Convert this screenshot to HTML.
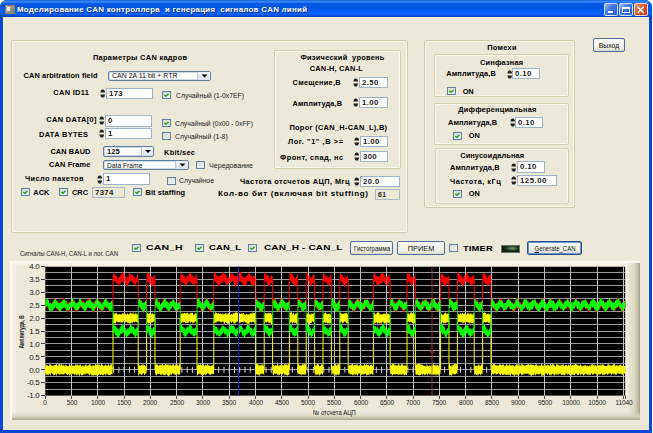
<!DOCTYPE html><html><head><meta charset="utf-8"><style>
*{margin:0;padding:0;box-sizing:border-box}
html,body{width:653px;height:433px;overflow:hidden;background:#fff;font-family:"Liberation Sans",sans-serif}
.win{position:absolute;left:0;top:0;width:652px;height:433px;background:#0a47d8;border-radius:7px 7px 0 0;overflow:hidden}
.title{position:absolute;left:0;top:0;width:652px;height:17px;background:linear-gradient(#1262dc 0px,#3a8cfa 1.8px,#0a5ae8 3.5px,#0054e3 8px,#005ff5 12px,#0462f8 14.3px,#0a42c8 16.2px,#0a3cc0 17px)}
.client{position:absolute;left:3px;top:17px;width:646px;height:413px;background:#ece9d8;border-top:1px solid #f7f4e4;border-left:1px solid #f4f1e2}
.t{position:absolute;white-space:pre;color:#000}
.grp{position:absolute;border:1px solid #d3cfaa;border-radius:2px;box-shadow:inset 0 0 0 1px #faf8ec}
.edit{position:absolute;background:#fff;border:1px solid #9db3c9;padding-left:2px;color:#222;white-space:pre;overflow:hidden}
.edit.dis{background:#ece9d8;border-color:#a9b8c6}
.spin{position:absolute}
.chk{position:absolute}
.combo{position:absolute;background:#fff;border:1px solid #5f7fa2;border-radius:2px;overflow:hidden;box-shadow:inset 0 0 0 0.5px #9fb5cc}
.ctext{position:absolute;left:3px;top:0;white-space:pre;color:#111}
.cbtn{position:absolute;right:0;top:-1px;bottom:-1px;background:linear-gradient(#f4f6fb,#d9e2f2);border-left:1px solid #b9c8e0}
.cbtn svg{display:block}
.btn{position:absolute;border:1px solid #4f6f98;border-radius:2px;background:linear-gradient(#fdfdfb,#f0efe8 70%,#dcd9cf);text-align:center;white-space:pre;color:#111}
.btn.def{border:1px solid #2c4f86;box-shadow:inset 0 0 0 1px #6d95d8}
svg{position:absolute}
</style></head><body>
<div class="win">
<div class="title"></div>
<div style="position:absolute;left:5px;top:5px;width:10px;height:9px;background:linear-gradient(135deg,#c8c0b0,#9a9080 60%,#7a7060);border:1px solid #8a806c"><div style="position:absolute;left:1px;top:1px;width:3px;height:4px;background:#f4f4f0"></div></div>
<div class="t" style="left:17px;top:4px;font-size:7.9px;font-weight:bold;color:#fff;line-height:11px;letter-spacing:0.274px;text-shadow:1px 1px 0 #0a2a8a">Моделирование CAN контроллера  и генерация  сигналов CAN линий</div>
<div style="position:absolute;left:604px;top:3px;width:14px;height:13px;border:1px solid rgba(255,255,255,0.75);border-radius:2px;background:linear-gradient(135deg,#9cbcf7,#3b77ea 45%,#2a5fd6)"><div style="position:absolute;left:2.5px;top:6.5px;width:5px;height:2px;background:#fff"></div></div>
<div style="position:absolute;left:619px;top:3px;width:14px;height:13px;border:1px solid rgba(255,255,255,0.75);border-radius:2px;background:linear-gradient(135deg,#9cbcf7,#3b77ea 45%,#2a5fd6)"><div style="position:absolute;left:2px;top:2.5px;width:8px;height:6.5px;border:1px solid #fff;border-top-width:2px"></div></div>
<div style="position:absolute;left:634px;top:3px;width:14px;height:13px;border:1px solid rgba(255,255,255,0.75);border-radius:2px;background:linear-gradient(135deg,#e9a083,#d8542e 45%,#c23a16)"><svg width="12" height="11" style="left:0;top:0"><path d="M2.6 2.8 L8.8 9 M8.8 2.8 L2.6 9" stroke="#fff" stroke-width="1.6"/></svg></div>
<div class="client">
</div>
</div>
<div style="position:absolute;left:0;top:0;width:653px;height:433px">
<div class="grp" style="left:11px;top:40px;width:397px;height:193px"></div>
<div class="t" style="left:93px;top:52.7px;font-size:7.4px;font-weight:bold;line-height:10px;color:#000;letter-spacing:0.307px;">Параметры CAN кадров</div>
<div class="t" style="left:23.5px;top:70.7px;font-size:7.4px;font-weight:bold;line-height:10px;color:#000;letter-spacing:0.107px;">CAN arbitration field</div>
<div class="combo" style="left:108px;top:71px;width:103px;height:10px"><div class="ctext" style="top:-1px;font-size:7.8px;font-weight:normal;line-height:9px;transform:scaleX(0.895);transform-origin:0 0;">CAN 2A 11 bit + RTR</div><div class="cbtn" style="width:13px"><svg width="13" height="10" viewBox="0 0 13 10"><path d="M3.5 3.5 L9.5 3.5 L6.5 6.5 Z" fill="#000"/></svg></div></div>
<div class="t" style="left:53.3px;top:88.2px;font-size:7.4px;font-weight:bold;line-height:10px;color:#000;letter-spacing:0.331px;">CAN ID11</div>
<svg class="spin" style="left:100px;top:89px" width="6" height="9" viewBox="0 0 6 9"><path d="M0.4 3.6 Q0.7 0.5 2.75 0.5 Q4.8 0.5 5.1 3.6 Z" fill="#222"/><path d="M0.4 5.4 Q0.7 8.5 2.75 8.5 Q4.8 8.5 5.1 5.4 Z" fill="#222"/></svg>
<div class="edit" style="left:106px;top:88px;width:47px;height:11px;font-size:7.8px;font-weight:bold;line-height:9px;letter-spacing:0.35px">173</div>
<svg class="chk" style="left:162px;top:91px" width="9" height="8" viewBox="0 0 9 8"><defs><linearGradient id="cg" x1="0" y1="0" x2="1" y2="1"><stop offset="0" stop-color="#d8d8d2"/><stop offset="1" stop-color="#f6f6f4"/></linearGradient></defs><rect x="0.5" y="0.5" width="8" height="7" fill="url(#cg)" stroke="#5f7fa6"/><path d="M2.4 3.9 L3.9 5.3 L6.6 2.7" stroke="#22a022" stroke-width="1.5" fill="none"/></svg>
<div class="t" style="left:175.5px;top:90.7px;font-size:7.8px;font-weight:normal;line-height:10px;color:#222;letter-spacing:0px;transform:scaleX(0.872);transform-origin:0 0;">Случайный (1-0x7EF)</div>
<div class="t" style="left:46.3px;top:115.2px;font-size:7.4px;font-weight:bold;line-height:10px;color:#000;letter-spacing:0.367px;">CAN DATA[0]</div>
<svg class="spin" style="left:99px;top:116px" width="6" height="9" viewBox="0 0 6 9"><path d="M0.4 3.6 Q0.7 0.5 2.75 0.5 Q4.8 0.5 5.1 3.6 Z" fill="#222"/><path d="M0.4 5.4 Q0.7 8.5 2.75 8.5 Q4.8 8.5 5.1 5.4 Z" fill="#222"/></svg>
<div class="edit" style="left:105px;top:115px;width:47px;height:12px;font-size:7.8px;font-weight:bold;line-height:10px;letter-spacing:0.35px">0</div>
<svg class="chk" style="left:162px;top:119px" width="9" height="8" viewBox="0 0 9 8"><defs><linearGradient id="cg" x1="0" y1="0" x2="1" y2="1"><stop offset="0" stop-color="#d8d8d2"/><stop offset="1" stop-color="#f6f6f4"/></linearGradient></defs><rect x="0.5" y="0.5" width="8" height="7" fill="url(#cg)" stroke="#5f7fa6"/><path d="M2.4 3.9 L3.9 5.3 L6.6 2.7" stroke="#22a022" stroke-width="1.5" fill="none"/></svg>
<div class="t" style="left:175px;top:118.7px;font-size:7.8px;font-weight:normal;line-height:10px;color:#222;letter-spacing:0px;transform:scaleX(0.866);transform-origin:0 0;">Случайный (0x00 - 0xFF)</div>
<div class="t" style="left:39px;top:130.2px;font-size:7.4px;font-weight:bold;line-height:10px;color:#000;letter-spacing:0.349px;">DATA BYTES</div>
<svg class="spin" style="left:99px;top:129px" width="6" height="9" viewBox="0 0 6 9"><path d="M0.4 3.6 Q0.7 0.5 2.75 0.5 Q4.8 0.5 5.1 3.6 Z" fill="#222"/><path d="M0.4 5.4 Q0.7 8.5 2.75 8.5 Q4.8 8.5 5.1 5.4 Z" fill="#222"/></svg>
<div class="edit" style="left:105px;top:128px;width:47px;height:11px;font-size:7.8px;font-weight:bold;line-height:9px;letter-spacing:0.35px">1</div>
<svg class="chk" style="left:162px;top:132px" width="9" height="8" viewBox="0 0 9 8"><defs><linearGradient id="cg" x1="0" y1="0" x2="1" y2="1"><stop offset="0" stop-color="#d8d8d2"/><stop offset="1" stop-color="#f6f6f4"/></linearGradient></defs><rect x="0.5" y="0.5" width="8" height="7" fill="url(#cg)" stroke="#5f7fa6"/></svg>
<div class="t" style="left:174.5px;top:131.7px;font-size:7.8px;font-weight:normal;line-height:10px;color:#222;letter-spacing:0px;transform:scaleX(0.882);transform-origin:0 0;">Случайный (1-8)</div>
<div class="t" style="left:50.4px;top:146.7px;font-size:7.4px;font-weight:bold;line-height:10px;color:#000;letter-spacing:0.083px;">CAN BAUD</div>
<div class="combo" style="left:103px;top:146px;width:51px;height:11px"><div class="ctext" style="top:-0.5px;font-size:7.6px;font-weight:bold;line-height:10px;">125</div><div class="cbtn" style="width:12px"><svg width="12" height="11" viewBox="0 0 12 11"><path d="M3.0 4.0 L9.0 4.0 L6.0 7.0 Z" fill="#000"/></svg></div></div>
<div class="t" style="left:164px;top:147.7px;font-size:7.4px;font-weight:bold;line-height:10px;color:#000;letter-spacing:0.319px;">Kbit/sec</div>
<div class="t" style="left:49px;top:160.2px;font-size:7.4px;font-weight:bold;line-height:10px;color:#000;letter-spacing:0.144px;">CAN Frame</div>
<div class="combo" style="left:103px;top:160px;width:86px;height:10px"><div class="ctext" style="top:-0.5px;font-size:7.6px;font-weight:normal;line-height:9px;transform:scaleX(0.883);transform-origin:0 0;">Data Frame</div><div class="cbtn" style="width:13px"><svg width="13" height="10" viewBox="0 0 13 10"><path d="M3.5 3.5 L9.5 3.5 L6.5 6.5 Z" fill="#000"/></svg></div></div>
<svg class="chk" style="left:196px;top:161px" width="9" height="8" viewBox="0 0 9 8"><defs><linearGradient id="cg" x1="0" y1="0" x2="1" y2="1"><stop offset="0" stop-color="#d8d8d2"/><stop offset="1" stop-color="#f6f6f4"/></linearGradient></defs><rect x="0.5" y="0.5" width="8" height="7" fill="url(#cg)" stroke="#5f7fa6"/></svg>
<div class="t" style="left:208.8px;top:160.7px;font-size:7.8px;font-weight:normal;line-height:10px;color:#222;letter-spacing:0px;transform:scaleX(0.911);transform-origin:0 0;">Чередование</div>
<div class="t" style="left:25px;top:173.7px;font-size:7.4px;font-weight:bold;line-height:10px;color:#000;letter-spacing:0.384px;">Число пакетов</div>
<svg class="spin" style="left:97px;top:175px" width="6" height="9" viewBox="0 0 6 9"><path d="M0.4 3.6 Q0.7 0.5 2.75 0.5 Q4.8 0.5 5.1 3.6 Z" fill="#222"/><path d="M0.4 5.4 Q0.7 8.5 2.75 8.5 Q4.8 8.5 5.1 5.4 Z" fill="#222"/></svg>
<div class="edit" style="left:103px;top:173px;width:47px;height:12px;font-size:7.8px;font-weight:bold;line-height:10px;letter-spacing:0.35px">1</div>
<svg class="chk" style="left:167px;top:177px" width="9" height="8" viewBox="0 0 9 8"><defs><linearGradient id="cg" x1="0" y1="0" x2="1" y2="1"><stop offset="0" stop-color="#d8d8d2"/><stop offset="1" stop-color="#f6f6f4"/></linearGradient></defs><rect x="0.5" y="0.5" width="8" height="7" fill="url(#cg)" stroke="#5f7fa6"/></svg>
<div class="t" style="left:179.4px;top:176.2px;font-size:7.8px;font-weight:normal;line-height:10px;color:#222;letter-spacing:0px;transform:scaleX(0.879);transform-origin:0 0;">Случайное</div>
<svg class="chk" style="left:21px;top:188px" width="9" height="8" viewBox="0 0 9 8"><defs><linearGradient id="cg" x1="0" y1="0" x2="1" y2="1"><stop offset="0" stop-color="#d8d8d2"/><stop offset="1" stop-color="#f6f6f4"/></linearGradient></defs><rect x="0.5" y="0.5" width="8" height="7" fill="url(#cg)" stroke="#5f7fa6"/><path d="M2.4 3.9 L3.9 5.3 L6.6 2.7" stroke="#22a022" stroke-width="1.5" fill="none"/></svg>
<div class="t" style="left:33.3px;top:188.2px;font-size:7.4px;font-weight:bold;line-height:10px;color:#000;letter-spacing:-0.008px;">ACK</div>
<svg class="chk" style="left:59px;top:188px" width="9" height="8" viewBox="0 0 9 8"><defs><linearGradient id="cg" x1="0" y1="0" x2="1" y2="1"><stop offset="0" stop-color="#d8d8d2"/><stop offset="1" stop-color="#f6f6f4"/></linearGradient></defs><rect x="0.5" y="0.5" width="8" height="7" fill="url(#cg)" stroke="#5f7fa6"/><path d="M2.4 3.9 L3.9 5.3 L6.6 2.7" stroke="#22a022" stroke-width="1.5" fill="none"/></svg>
<div class="t" style="left:72px;top:188.2px;font-size:7.4px;font-weight:bold;line-height:10px;color:#000;letter-spacing:-0.008px;">CRC</div>
<div class="edit dis" style="left:92px;top:187px;width:33px;height:11px;font-size:7.8px;font-weight:bold;line-height:9px;letter-spacing:0.35px">7374</div>
<svg class="chk" style="left:133px;top:188px" width="9" height="8" viewBox="0 0 9 8"><defs><linearGradient id="cg" x1="0" y1="0" x2="1" y2="1"><stop offset="0" stop-color="#d8d8d2"/><stop offset="1" stop-color="#f6f6f4"/></linearGradient></defs><rect x="0.5" y="0.5" width="8" height="7" fill="url(#cg)" stroke="#5f7fa6"/><path d="M2.4 3.9 L3.9 5.3 L6.6 2.7" stroke="#22a022" stroke-width="1.5" fill="none"/></svg>
<div class="t" style="left:145.5px;top:188.2px;font-size:7.4px;font-weight:bold;line-height:10px;color:#000;letter-spacing:0.082px;">Bit staffing</div>
<div class="t" style="left:240px;top:176.7px;font-size:7.4px;font-weight:bold;line-height:10px;color:#000;letter-spacing:0.408px;">Частота отсчетов АЦП, Мгц</div>
<svg class="spin" style="left:354px;top:177px" width="6" height="9" viewBox="0 0 6 9"><path d="M0.4 3.6 Q0.7 0.5 2.75 0.5 Q4.8 0.5 5.1 3.6 Z" fill="#222"/><path d="M0.4 5.4 Q0.7 8.5 2.75 8.5 Q4.8 8.5 5.1 5.4 Z" fill="#222"/></svg>
<div class="edit" style="left:360px;top:176px;width:40px;height:11px;font-size:7.6px;font-weight:bold;line-height:9px;letter-spacing:0.5px">20.0</div>
<div class="t" style="left:218px;top:189.0px;font-size:8.0px;font-weight:bold;line-height:10px;color:#000;letter-spacing:0.672px;">Кол-во бит (включая bit stuffing)</div>
<div class="edit dis" style="left:375px;top:189px;width:25px;height:11px;font-size:7px;font-weight:bold;line-height:9px;letter-spacing:0.3px">61</div>
<div class="grp" style="left:274px;top:50px;width:127px;height:119px"></div>
<div class="t" style="left:300.4px;top:53.2px;font-size:7.4px;font-weight:bold;line-height:10px;color:#000;letter-spacing:0.279px;">Физический  уровень</div>
<div class="t" style="left:309.8px;top:64.2px;font-size:7.4px;font-weight:bold;line-height:10px;color:#000;letter-spacing:0.19px;">CAN-H, CAN-L</div>
<div class="t" style="left:292.6px;top:77.9px;font-size:7.4px;font-weight:bold;line-height:10px;color:#000;letter-spacing:0.247px;">Смещение,В</div>
<svg class="spin" style="left:353px;top:78px" width="6" height="9" viewBox="0 0 6 9"><path d="M0.4 3.6 Q0.7 0.5 2.75 0.5 Q4.8 0.5 5.1 3.6 Z" fill="#222"/><path d="M0.4 5.4 Q0.7 8.5 2.75 8.5 Q4.8 8.5 5.1 5.4 Z" fill="#222"/></svg>
<div class="edit" style="left:359px;top:77px;width:29px;height:11px;font-size:7.8px;font-weight:bold;line-height:9px;letter-spacing:0.35px">2.50</div>
<div class="t" style="left:292.6px;top:98.5px;font-size:7.4px;font-weight:bold;line-height:10px;color:#000;letter-spacing:0.096px;">Амплитуда,В</div>
<svg class="spin" style="left:353px;top:98px" width="6" height="9" viewBox="0 0 6 9"><path d="M0.4 3.6 Q0.7 0.5 2.75 0.5 Q4.8 0.5 5.1 3.6 Z" fill="#222"/><path d="M0.4 5.4 Q0.7 8.5 2.75 8.5 Q4.8 8.5 5.1 5.4 Z" fill="#222"/></svg>
<div class="edit" style="left:359px;top:97px;width:29px;height:11px;font-size:7.8px;font-weight:bold;line-height:9px;letter-spacing:0.35px">1.00</div>
<div class="t" style="left:289.4px;top:123.3px;font-size:7.4px;font-weight:bold;line-height:10px;color:#000;letter-spacing:0.299px;">Порог (CAN_H-CAN_L),В)</div>
<div class="t" style="left:288px;top:137.1px;font-size:7.4px;font-weight:bold;line-height:10px;color:#000;letter-spacing:0.584px;">Лог. "1" ,В >=</div>
<svg class="spin" style="left:354px;top:137px" width="6" height="9" viewBox="0 0 6 9"><path d="M0.4 3.6 Q0.7 0.5 2.75 0.5 Q4.8 0.5 5.1 3.6 Z" fill="#222"/><path d="M0.4 5.4 Q0.7 8.5 2.75 8.5 Q4.8 8.5 5.1 5.4 Z" fill="#222"/></svg>
<div class="edit" style="left:360px;top:136px;width:28px;height:11px;font-size:7.8px;font-weight:bold;line-height:9px;letter-spacing:0.35px">1.00</div>
<div class="t" style="left:280px;top:152.7px;font-size:7.4px;font-weight:bold;line-height:10px;color:#000;letter-spacing:0.426px;">Фронт, спад, нс</div>
<svg class="spin" style="left:354px;top:152px" width="6" height="9" viewBox="0 0 6 9"><path d="M0.4 3.6 Q0.7 0.5 2.75 0.5 Q4.8 0.5 5.1 3.6 Z" fill="#222"/><path d="M0.4 5.4 Q0.7 8.5 2.75 8.5 Q4.8 8.5 5.1 5.4 Z" fill="#222"/></svg>
<div class="edit" style="left:360px;top:151px;width:28px;height:11px;font-size:7.8px;font-weight:bold;line-height:9px;letter-spacing:0.35px">300</div>
<div class="grp" style="left:424px;top:40px;width:151px;height:168px"></div>
<div class="t" style="left:487.2px;top:43.3px;font-size:7.4px;font-weight:bold;line-height:10px;color:#000;letter-spacing:0.305px;">Помехи</div>
<div class="grp" style="left:434px;top:54px;width:135px;height:43px"></div>
<div class="t" style="left:479.9px;top:57.6px;font-size:7.4px;font-weight:bold;line-height:10px;color:#000;letter-spacing:0.215px;">Синфазная</div>
<div class="t" style="left:446.3px;top:69.3px;font-size:7.4px;font-weight:bold;line-height:10px;color:#000;letter-spacing:0.106px;">Амплитуда,В</div>
<svg class="spin" style="left:507px;top:70px" width="6" height="9" viewBox="0 0 6 9"><path d="M0.4 3.6 Q0.7 0.5 2.75 0.5 Q4.8 0.5 5.1 3.6 Z" fill="#222"/><path d="M0.4 5.4 Q0.7 8.5 2.75 8.5 Q4.8 8.5 5.1 5.4 Z" fill="#222"/></svg>
<div class="edit" style="left:512px;top:68px;width:28px;height:11px;font-size:7.8px;font-weight:bold;line-height:9px;letter-spacing:0.35px">0.10</div>
<svg class="chk" style="left:447px;top:87px" width="9" height="8" viewBox="0 0 9 8"><defs><linearGradient id="cg" x1="0" y1="0" x2="1" y2="1"><stop offset="0" stop-color="#d8d8d2"/><stop offset="1" stop-color="#f6f6f4"/></linearGradient></defs><rect x="0.5" y="0.5" width="8" height="7" fill="url(#cg)" stroke="#5f7fa6"/><path d="M2.4 3.9 L3.9 5.3 L6.6 2.7" stroke="#22a022" stroke-width="1.5" fill="none"/></svg>
<div class="t" style="left:462.7px;top:86.5px;font-size:7.4px;font-weight:bold;line-height:10px;color:#000;letter-spacing:-0.094px;">ON</div>
<div class="grp" style="left:434px;top:103px;width:135px;height:42px"></div>
<div class="t" style="left:458.3px;top:105.4px;font-size:7.4px;font-weight:bold;line-height:10px;color:#000;letter-spacing:0.189px;">Дифференциальная</div>
<div class="t" style="left:448px;top:117.7px;font-size:7.4px;font-weight:bold;line-height:10px;color:#000;letter-spacing:0.056px;">Амплитуда,В</div>
<svg class="spin" style="left:510px;top:118px" width="6" height="9" viewBox="0 0 6 9"><path d="M0.4 3.6 Q0.7 0.5 2.75 0.5 Q4.8 0.5 5.1 3.6 Z" fill="#222"/><path d="M0.4 5.4 Q0.7 8.5 2.75 8.5 Q4.8 8.5 5.1 5.4 Z" fill="#222"/></svg>
<div class="edit" style="left:515px;top:117px;width:28px;height:11px;font-size:7.8px;font-weight:bold;line-height:9px;letter-spacing:0.35px">0.10</div>
<svg class="chk" style="left:453px;top:132px" width="9" height="8" viewBox="0 0 9 8"><defs><linearGradient id="cg" x1="0" y1="0" x2="1" y2="1"><stop offset="0" stop-color="#d8d8d2"/><stop offset="1" stop-color="#f6f6f4"/></linearGradient></defs><rect x="0.5" y="0.5" width="8" height="7" fill="url(#cg)" stroke="#5f7fa6"/><path d="M2.4 3.9 L3.9 5.3 L6.6 2.7" stroke="#22a022" stroke-width="1.5" fill="none"/></svg>
<div class="t" style="left:468.8px;top:130.9px;font-size:7.4px;font-weight:bold;line-height:10px;color:#000;letter-spacing:-0.094px;">ON</div>
<div class="grp" style="left:435px;top:148px;width:134px;height:56px"></div>
<div class="t" style="left:460.2px;top:150.7px;font-size:7.4px;font-weight:bold;line-height:10px;color:#000;letter-spacing:0.11px;">Синусоидальная</div>
<div class="t" style="left:450px;top:162.7px;font-size:7.4px;font-weight:bold;line-height:10px;color:#000;letter-spacing:0.106px;">Амплитуда,В</div>
<svg class="spin" style="left:511px;top:163px" width="6" height="9" viewBox="0 0 6 9"><path d="M0.4 3.6 Q0.7 0.5 2.75 0.5 Q4.8 0.5 5.1 3.6 Z" fill="#222"/><path d="M0.4 5.4 Q0.7 8.5 2.75 8.5 Q4.8 8.5 5.1 5.4 Z" fill="#222"/></svg>
<div class="edit" style="left:517px;top:161px;width:28px;height:12px;font-size:7.8px;font-weight:bold;line-height:10px;letter-spacing:0.35px">0.10</div>
<div class="t" style="left:450px;top:176.7px;font-size:7.4px;font-weight:bold;line-height:10px;color:#000;letter-spacing:0.468px;">Частота, кГц</div>
<svg class="spin" style="left:511px;top:176px" width="6" height="9" viewBox="0 0 6 9"><path d="M0.4 3.6 Q0.7 0.5 2.75 0.5 Q4.8 0.5 5.1 3.6 Z" fill="#222"/><path d="M0.4 5.4 Q0.7 8.5 2.75 8.5 Q4.8 8.5 5.1 5.4 Z" fill="#222"/></svg>
<div class="edit" style="left:517px;top:175px;width:40px;height:11px;font-size:7.8px;font-weight:bold;line-height:9px;letter-spacing:0.5px">125.00</div>
<svg class="chk" style="left:453px;top:190px" width="9" height="8" viewBox="0 0 9 8"><defs><linearGradient id="cg" x1="0" y1="0" x2="1" y2="1"><stop offset="0" stop-color="#d8d8d2"/><stop offset="1" stop-color="#f6f6f4"/></linearGradient></defs><rect x="0.5" y="0.5" width="8" height="7" fill="url(#cg)" stroke="#5f7fa6"/><path d="M2.4 3.9 L3.9 5.3 L6.6 2.7" stroke="#22a022" stroke-width="1.5" fill="none"/></svg>
<div class="t" style="left:468.8px;top:189.0px;font-size:7.4px;font-weight:bold;line-height:10px;color:#000;letter-spacing:-0.094px;">ON</div>
<div class="btn" style="left:593px;top:38px;width:32px;height:14px;font-size:7.4px;line-height:13.0px;letter-spacing:0px;"><span style="position:absolute;left:50%;top:0;transform:translateX(-50%) scaleX(0.927);transform-origin:50% 0">Выход</span></div>
<svg class="chk" style="left:132px;top:244px" width="9" height="8" viewBox="0 0 9 8"><defs><linearGradient id="cg" x1="0" y1="0" x2="1" y2="1"><stop offset="0" stop-color="#d8d8d2"/><stop offset="1" stop-color="#f6f6f4"/></linearGradient></defs><rect x="0.5" y="0.5" width="8" height="7" fill="url(#cg)" stroke="#5f7fa6"/><path d="M2.4 3.9 L3.9 5.3 L6.6 2.7" stroke="#22a022" stroke-width="1.5" fill="none"/></svg>
<div class="t" style="left:146.3px;top:243.2px;font-size:7.9px;font-weight:bold;line-height:10px;color:#000;letter-spacing:0.1px;transform:scaleX(1.33);transform-origin:0 0">CAN_H</div>
<svg class="chk" style="left:195px;top:244px" width="9" height="8" viewBox="0 0 9 8"><defs><linearGradient id="cg" x1="0" y1="0" x2="1" y2="1"><stop offset="0" stop-color="#d8d8d2"/><stop offset="1" stop-color="#f6f6f4"/></linearGradient></defs><rect x="0.5" y="0.5" width="8" height="7" fill="url(#cg)" stroke="#5f7fa6"/><path d="M2.4 3.9 L3.9 5.3 L6.6 2.7" stroke="#22a022" stroke-width="1.5" fill="none"/></svg>
<div class="t" style="left:209.2px;top:243.2px;font-size:7.9px;font-weight:bold;line-height:10px;color:#000;letter-spacing:0.1px;transform:scaleX(1.2);transform-origin:0 0">CAN_L</div>
<svg class="chk" style="left:248px;top:244px" width="9" height="8" viewBox="0 0 9 8"><defs><linearGradient id="cg" x1="0" y1="0" x2="1" y2="1"><stop offset="0" stop-color="#d8d8d2"/><stop offset="1" stop-color="#f6f6f4"/></linearGradient></defs><rect x="0.5" y="0.5" width="8" height="7" fill="url(#cg)" stroke="#5f7fa6"/><path d="M2.4 3.9 L3.9 5.3 L6.6 2.7" stroke="#22a022" stroke-width="1.5" fill="none"/></svg>
<div class="t" style="left:263.5px;top:243.2px;font-size:7.9px;font-weight:bold;line-height:10px;color:#000;letter-spacing:0.1px;transform:scaleX(1.27);transform-origin:0 0">CAN_H - CAN_L</div>
<div class="btn" style="left:350px;top:241px;width:43px;height:14px;font-size:7.6px;line-height:14px;letter-spacing:0px;"><span style="position:absolute;left:50%;top:0;transform:translateX(-50%) scaleX(0.796);transform-origin:50% 0">Гистограмма</span></div>
<div class="btn" style="left:397px;top:241px;width:48px;height:14px;font-size:7.4px;line-height:14px;letter-spacing:0px;">ПРИЕМ</div>
<svg class="chk" style="left:449px;top:244px" width="9" height="8" viewBox="0 0 9 8"><defs><linearGradient id="cg" x1="0" y1="0" x2="1" y2="1"><stop offset="0" stop-color="#d8d8d2"/><stop offset="1" stop-color="#f6f6f4"/></linearGradient></defs><rect x="0.5" y="0.5" width="8" height="7" fill="url(#cg)" stroke="#5f7fa6"/></svg>
<div class="t" style="left:463.3px;top:243.9px;font-size:7.9px;font-weight:bold;line-height:10px;color:#000;letter-spacing:0.1px;transform:scaleX(1.19);transform-origin:0 0">TIMER</div>
<div style="position:absolute;left:501px;top:245px;width:19px;height:8px;background:radial-gradient(ellipse 9px 3px at 60% 40%,#7a9a78,#2c4a2a 60%,#0f200f);border:1px solid #6a7464"></div>
<div class="btn def" style="left:527px;top:241px;width:55px;height:14px;font-size:7.6px;line-height:13.0px;letter-spacing:0px;"><span style="position:absolute;left:50%;top:0;transform:translateX(-50%) scaleX(0.790);transform-origin:50% 0"><u>G</u>enerate_CAN</span></div>
<div class="t" style="left:20px;top:248.9px;font-size:7.4px;font-weight:normal;line-height:10px;color:#222;letter-spacing:0px;transform:scaleX(0.819);transform-origin:0 0;">Сигналы CAN-H, CAN-L и лог. CAN</div>
</div>
<div style="position:absolute;left:10px;top:261px;width:630px;height:159px;background:#ece9d8"></div>
<div style="position:absolute;left:10px;top:261px;width:630px;height:5px;background:linear-gradient(#fffffa,#f6f4e8 40%,rgba(236,233,216,0))"></div>
<div style="position:absolute;left:10px;top:261px;width:7px;height:159px;background:linear-gradient(90deg,#fffffa,#f8f6ec 35%,rgba(236,233,216,0))"></div>
<div style="position:absolute;left:628px;top:263px;width:12px;height:157px;background:linear-gradient(90deg,rgba(236,233,216,0),#d9d6c2 55%,#b9b59e 88%,#9d9a84)"></div>
<div style="position:absolute;left:12px;top:412px;width:628px;height:8px;background:linear-gradient(rgba(236,233,216,0),#d6d3be 60%,#b5b29b 90%,#a5a28b)"></div>
<svg width="653" height="433" style="left:0;top:0" viewBox="0 0 653 433">
<rect x="45.3" y="266.4" width="580.1" height="129.20000000000005" fill="#000"/>
<path d="M45.3 265.79999999999995H626.1V395.6" stroke="#fffef6" stroke-width="1.3" fill="none"/>
<path d="M45.3 272.9H625.4 M45.3 279.3H625.4 M45.3 285.8H625.4 M45.3 292.2H625.4 M45.3 298.7H625.4 M45.3 305.2H625.4 M45.3 311.6H625.4 M45.3 318.1H625.4 M45.3 324.5H625.4 M45.3 331.0H625.4 M45.3 337.5H625.4 M45.3 343.9H625.4 M45.3 350.4H625.4 M45.3 356.8H625.4 M45.3 363.3H625.4 M45.3 369.8H625.4 M45.3 376.2H625.4 M45.3 382.7H625.4 M45.3 389.1H625.4" stroke="#9a9a9a" stroke-width="1" shape-rendering="crispEdges"/>
<path d="M71.6 266.4V395.6 M97.8 266.4V395.6 M124.1 266.4V395.6 M150.4 266.4V395.6 M176.7 266.4V395.6 M202.9 266.4V395.6 M229.2 266.4V395.6 M255.5 266.4V395.6 M281.8 266.4V395.6 M308.0 266.4V395.6 M334.3 266.4V395.6 M360.6 266.4V395.6 M386.8 266.4V395.6 M413.1 266.4V395.6 M439.4 266.4V395.6 M465.7 266.4V395.6 M491.9 266.4V395.6 M518.2 266.4V395.6 M544.5 266.4V395.6 M570.8 266.4V395.6 M597.0 266.4V395.6 M623.3 266.4V395.6" stroke="#b8b8b8" stroke-width="1" shape-rendering="crispEdges"/>
<path d="M45.3 366.8V372.8 M50.6 366.8V372.8 M55.8 366.8V372.8 M61.1 366.8V372.8 M66.3 366.8V372.8 M71.6 366.8V372.8 M76.8 366.8V372.8 M82.1 366.8V372.8 M87.3 366.8V372.8 M92.6 366.8V372.8 M97.8 366.8V372.8 M103.1 366.8V372.8 M108.4 366.8V372.8 M113.6 366.8V372.8 M118.9 366.8V372.8 M124.1 366.8V372.8 M129.4 366.8V372.8 M134.6 366.8V372.8 M139.9 366.8V372.8 M145.1 366.8V372.8 M150.4 366.8V372.8 M155.6 366.8V372.8 M160.9 366.8V372.8 M166.2 366.8V372.8 M171.4 366.8V372.8 M176.7 366.8V372.8 M181.9 366.8V372.8 M187.2 366.8V372.8 M192.4 366.8V372.8 M197.7 366.8V372.8 M202.9 366.8V372.8 M208.2 366.8V372.8 M213.4 366.8V372.8 M218.7 366.8V372.8 M224.0 366.8V372.8 M229.2 366.8V372.8 M234.5 366.8V372.8 M239.7 366.8V372.8 M245.0 366.8V372.8 M250.2 366.8V372.8 M255.5 366.8V372.8 M260.7 366.8V372.8 M266.0 366.8V372.8 M271.2 366.8V372.8 M276.5 366.8V372.8 M281.8 366.8V372.8 M287.0 366.8V372.8 M292.3 366.8V372.8 M297.5 366.8V372.8 M302.8 366.8V372.8 M308.0 366.8V372.8 M313.3 366.8V372.8 M318.5 366.8V372.8 M323.8 366.8V372.8 M329.0 366.8V372.8 M334.3 366.8V372.8 M339.6 366.8V372.8 M344.8 366.8V372.8 M350.1 366.8V372.8 M355.3 366.8V372.8 M360.6 366.8V372.8 M365.8 366.8V372.8 M371.1 366.8V372.8 M376.3 366.8V372.8 M381.6 366.8V372.8 M386.8 366.8V372.8 M392.1 366.8V372.8 M397.4 366.8V372.8 M402.6 366.8V372.8 M407.9 366.8V372.8 M413.1 366.8V372.8 M418.4 366.8V372.8 M423.6 366.8V372.8 M428.9 366.8V372.8 M434.1 366.8V372.8 M439.4 366.8V372.8 M444.6 366.8V372.8 M449.9 366.8V372.8 M455.2 366.8V372.8 M460.4 366.8V372.8 M465.7 366.8V372.8 M470.9 366.8V372.8 M476.2 366.8V372.8 M481.4 366.8V372.8 M486.7 366.8V372.8 M491.9 366.8V372.8 M497.2 366.8V372.8 M502.4 366.8V372.8 M507.7 366.8V372.8 M513.0 366.8V372.8 M518.2 366.8V372.8 M523.5 366.8V372.8 M528.7 366.8V372.8 M534.0 366.8V372.8 M539.2 366.8V372.8 M544.5 366.8V372.8 M549.7 366.8V372.8 M555.0 366.8V372.8 M560.2 366.8V372.8 M565.5 366.8V372.8 M570.8 366.8V372.8 M576.0 366.8V372.8 M581.3 366.8V372.8 M586.5 366.8V372.8 M591.8 366.8V372.8 M597.0 366.8V372.8 M602.3 366.8V372.8 M607.5 366.8V372.8 M612.8 366.8V372.8 M618.0 366.8V372.8 M623.3 366.8V372.8" stroke="#d8d8d8" stroke-width="1"/>
<path d="M45.3 365.2 L45.9 363.8 L46.5 365.0 L47.1 366.0 L47.7 364.7 L48.3 366.3 L48.9 366.3 L49.5 364.5 L50.1 363.6 L50.7 364.6 L51.3 366.1 L51.9 365.0 L52.5 366.0 L53.1 366.5 L53.7 365.2 L54.3 365.0 L54.9 365.1 L55.5 365.2 L56.1 363.6 L56.7 364.0 L57.3 365.6 L57.9 365.7 L58.5 364.3 L59.1 364.0 L59.7 363.7 L60.3 366.6 L60.9 363.8 L61.5 363.6 L62.1 366.3 L62.7 364.2 L63.3 366.3 L63.9 363.7 L64.5 366.2 L65.1 366.3 L65.7 364.2 L66.3 364.9 L66.9 366.0 L67.5 366.2 L68.1 366.2 L68.7 365.9 L69.3 363.6 L69.9 365.6 L70.5 365.9 L71.1 364.0 L71.7 366.3 L72.3 365.9 L72.9 364.2 L73.5 365.7 L74.1 366.3 L74.7 365.8 L75.3 365.4 L75.9 363.7 L76.5 364.8 L77.1 366.0 L77.7 363.8 L78.3 365.8 L78.9 364.3 L79.5 366.0 L80.1 363.9 L80.7 365.3 L81.3 366.4 L81.9 365.8 L82.5 365.8 L83.1 364.8 L83.7 366.0 L84.3 366.4 L84.9 364.9 L85.5 364.7 L86.1 363.8 L86.7 366.5 L87.3 365.2 L87.9 366.0 L88.5 364.8 L89.1 365.5 L89.7 363.6 L90.3 364.5 L90.9 366.1 L91.5 366.5 L92.1 364.5 L92.7 366.5 L93.3 365.1 L93.9 365.6 L94.5 366.3 L95.1 364.3 L95.7 364.3 L96.3 364.2 L96.9 365.5 L97.5 363.9 L98.1 365.3 L98.7 364.0 L99.3 364.7 L99.9 364.8 L100.5 366.3 L101.1 363.6 L101.7 364.4 L102.3 364.4 L102.9 365.2 L103.5 366.3 L104.1 366.5 L104.7 365.1 L105.3 364.5 L105.9 364.7 L106.5 365.8 L107.1 365.7 L107.7 366.0 L108.3 363.8 L108.9 365.2 L109.5 365.6 L110.1 366.0 L110.7 364.1 L111.3 363.9 L111.9 364.8 L112.5 366.2 L112.5 374.4 L111.9 373.9 L111.3 374.1 L110.7 375.7 L110.1 374.3 L109.5 375.0 L108.9 375.6 L108.3 374.9 L107.7 373.5 L107.1 375.0 L106.5 373.0 L105.9 375.7 L105.3 374.5 L104.7 373.7 L104.1 374.8 L103.5 375.2 L102.9 375.5 L102.3 374.7 L101.7 374.1 L101.1 375.6 L100.5 374.9 L99.9 374.8 L99.3 374.1 L98.7 374.7 L98.1 375.3 L97.5 375.6 L96.9 375.0 L96.3 375.7 L95.7 375.1 L95.1 375.7 L94.5 374.6 L93.9 376.0 L93.3 375.2 L92.7 374.9 L92.1 375.8 L91.5 375.7 L90.9 373.1 L90.3 374.7 L89.7 374.9 L89.1 375.6 L88.5 373.4 L87.9 374.1 L87.3 373.1 L86.7 373.8 L86.1 373.6 L85.5 373.8 L84.9 375.5 L84.3 373.6 L83.7 375.1 L83.1 373.8 L82.5 375.4 L81.9 375.1 L81.3 375.8 L80.7 373.3 L80.1 374.8 L79.5 375.8 L78.9 375.8 L78.3 373.5 L77.7 375.4 L77.1 373.4 L76.5 375.6 L75.9 374.4 L75.3 374.3 L74.7 374.8 L74.1 374.7 L73.5 373.2 L72.9 373.9 L72.3 373.7 L71.7 375.9 L71.1 374.9 L70.5 374.1 L69.9 375.6 L69.3 375.4 L68.7 373.8 L68.1 374.2 L67.5 374.9 L66.9 375.2 L66.3 374.3 L65.7 373.5 L65.1 373.1 L64.5 373.7 L63.9 375.2 L63.3 374.0 L62.7 373.8 L62.1 374.8 L61.5 374.2 L60.9 374.4 L60.3 373.6 L59.7 375.5 L59.1 374.1 L58.5 374.2 L57.9 373.2 L57.3 373.6 L56.7 375.1 L56.1 375.9 L55.5 373.8 L54.9 374.9 L54.3 374.9 L53.7 375.5 L53.1 374.4 L52.5 373.7 L51.9 373.1 L51.3 373.0 L50.7 374.8 L50.1 375.9 L49.5 373.1 L48.9 375.4 L48.3 373.9 L47.7 375.3 L47.1 374.5 L46.5 374.7 L45.9 374.4 L45.3 374.6Z" fill="#ffff00"/>
<path d="M138.2 364.0 L138.8 364.4 L139.4 365.7 L140.0 365.2 L140.6 365.9 L141.2 364.7 L141.8 365.6 L142.4 363.6 L143.0 366.3 L143.6 363.9 L144.2 364.4 L144.8 365.6 L145.4 366.5 L146.0 365.2 L146.6 364.1 L146.6 373.7 L146.0 373.0 L145.4 373.4 L144.8 375.3 L144.2 374.7 L143.6 373.1 L143.0 373.1 L142.4 374.3 L141.8 375.5 L141.2 374.4 L140.6 374.2 L140.0 373.8 L139.4 373.5 L138.8 375.8 L138.2 375.5Z" fill="#ffff00"/>
<path d="M155.0 366.1 L155.6 364.7 L156.2 364.7 L156.8 364.1 L157.4 364.5 L158.0 365.1 L158.6 366.5 L159.2 364.4 L159.8 365.7 L160.4 364.5 L161.0 364.7 L161.6 365.4 L162.2 363.8 L162.8 363.8 L163.4 366.2 L164.0 364.7 L164.6 365.4 L165.2 363.9 L165.8 363.7 L166.4 364.6 L167.0 364.4 L167.6 364.6 L168.2 365.9 L168.8 363.6 L169.4 364.9 L170.0 365.6 L170.6 364.0 L171.2 366.3 L171.8 364.9 L172.4 365.1 L173.0 364.1 L173.6 364.2 L174.2 365.6 L174.8 366.1 L175.4 365.0 L176.0 364.0 L176.6 363.7 L177.2 363.7 L177.8 365.9 L178.4 365.7 L179.0 364.6 L179.6 364.0 L180.2 365.6 L180.2 374.1 L179.6 374.6 L179.0 374.5 L178.4 375.1 L177.8 374.5 L177.2 373.2 L176.6 374.4 L176.0 375.0 L175.4 375.1 L174.8 373.4 L174.2 375.3 L173.6 373.5 L173.0 373.2 L172.4 373.0 L171.8 375.3 L171.2 374.3 L170.6 374.0 L170.0 375.7 L169.4 375.3 L168.8 375.9 L168.2 375.7 L167.6 375.1 L167.0 375.4 L166.4 373.6 L165.8 374.4 L165.2 375.4 L164.6 374.7 L164.0 375.7 L163.4 374.3 L162.8 375.1 L162.2 373.2 L161.6 375.3 L161.0 375.2 L160.4 374.5 L159.8 374.0 L159.2 373.5 L158.6 374.4 L158.0 373.5 L157.4 373.6 L156.8 375.8 L156.2 374.9 L155.6 374.3 L155.0 373.1Z" fill="#ffff00"/>
<path d="M197.0 364.0 L197.6 365.9 L198.2 363.7 L198.8 364.8 L199.4 365.0 L200.0 364.7 L200.6 363.7 L201.2 365.4 L201.8 364.9 L202.4 364.5 L203.0 364.9 L203.6 363.7 L204.2 365.8 L204.8 366.2 L205.4 364.1 L206.0 365.1 L206.6 366.0 L207.2 363.8 L207.8 364.2 L208.4 366.0 L209.0 364.5 L209.6 365.5 L210.2 366.2 L210.8 366.2 L211.4 365.8 L212.0 365.0 L212.6 365.4 L213.2 365.0 L213.8 365.9 L213.8 374.9 L213.2 373.4 L212.6 374.2 L212.0 374.3 L211.4 373.6 L210.8 374.5 L210.2 375.2 L209.6 374.8 L209.0 373.9 L208.4 373.6 L207.8 373.0 L207.2 373.3 L206.6 374.8 L206.0 373.9 L205.4 375.7 L204.8 374.3 L204.2 374.4 L203.6 375.7 L203.0 374.2 L202.4 373.2 L201.8 374.4 L201.2 375.4 L200.6 374.5 L200.0 373.0 L199.4 374.5 L198.8 373.6 L198.2 374.5 L197.6 375.5 L197.0 375.7Z" fill="#ffff00"/>
<path d="M255.8 364.6 L256.4 364.0 L257.0 364.0 L257.6 364.3 L258.2 363.9 L258.8 365.6 L259.4 365.9 L260.0 363.9 L260.6 365.8 L261.2 365.8 L261.8 364.1 L262.4 364.2 L263.0 365.4 L263.6 366.5 L264.2 364.5 L264.2 375.7 L263.6 373.6 L263.0 375.0 L262.4 373.3 L261.8 374.2 L261.2 373.3 L260.6 375.1 L260.0 373.4 L259.4 376.0 L258.8 375.7 L258.2 373.9 L257.6 375.4 L257.0 373.7 L256.4 374.8 L255.8 374.5Z" fill="#ffff00"/>
<path d="M272.6 363.7 L273.2 365.0 L273.8 365.1 L274.4 366.0 L275.0 366.2 L275.6 364.9 L276.2 364.9 L276.8 366.0 L277.4 364.0 L278.0 363.8 L278.6 366.4 L279.2 365.2 L279.8 365.6 L280.4 365.0 L281.0 364.8 L281.6 364.5 L282.2 366.0 L282.8 364.3 L283.4 366.0 L284.0 365.0 L284.6 363.9 L285.2 364.4 L285.8 364.7 L286.4 364.8 L287.0 363.6 L287.6 365.8 L288.2 364.3 L288.8 364.1 L289.4 363.9 L289.4 375.6 L288.8 374.2 L288.2 375.3 L287.6 375.7 L287.0 375.4 L286.4 374.5 L285.8 374.2 L285.2 375.5 L284.6 375.4 L284.0 373.0 L283.4 373.5 L282.8 374.2 L282.2 374.3 L281.6 375.5 L281.0 373.0 L280.4 374.3 L279.8 374.4 L279.2 375.3 L278.6 375.8 L278.0 373.2 L277.4 375.9 L276.8 373.6 L276.2 373.4 L275.6 374.5 L275.0 373.1 L274.4 373.2 L273.8 375.0 L273.2 375.2 L272.6 373.3Z" fill="#ffff00"/>
<path d="M297.8 364.5 L298.4 364.3 L299.0 364.4 L299.6 365.5 L300.2 366.5 L300.8 364.6 L301.4 365.9 L302.0 364.6 L302.6 364.6 L303.2 365.0 L303.8 363.6 L304.4 364.5 L305.0 363.6 L305.6 364.7 L306.2 365.8 L306.2 374.2 L305.6 375.2 L305.0 373.0 L304.4 375.2 L303.8 374.9 L303.2 374.1 L302.6 374.7 L302.0 374.0 L301.4 375.8 L300.8 374.8 L300.2 374.0 L299.6 374.4 L299.0 373.2 L298.4 374.2 L297.8 375.3Z" fill="#ffff00"/>
<path d="M314.6 366.4 L315.2 365.4 L315.8 365.8 L316.4 364.9 L317.0 363.7 L317.6 363.6 L318.2 364.1 L318.8 364.8 L319.4 366.4 L320.0 366.1 L320.6 366.1 L321.2 364.7 L321.8 363.7 L322.4 365.0 L323.0 365.5 L323.0 373.8 L322.4 374.8 L321.8 374.2 L321.2 373.1 L320.6 374.4 L320.0 374.4 L319.4 375.8 L318.8 375.2 L318.2 373.2 L317.6 374.9 L317.0 374.7 L316.4 374.5 L315.8 375.7 L315.2 373.3 L314.6 373.5Z" fill="#ffff00"/>
<path d="M331.4 364.6 L332.0 365.7 L332.6 365.7 L333.2 365.8 L333.8 366.1 L334.4 365.4 L335.0 364.3 L335.6 363.6 L336.2 366.3 L336.8 365.3 L337.4 363.6 L338.0 365.0 L338.6 364.4 L339.2 363.6 L339.8 364.7 L339.8 373.3 L339.2 375.4 L338.6 374.4 L338.0 375.8 L337.4 373.7 L336.8 374.4 L336.2 375.7 L335.6 375.8 L335.0 373.1 L334.4 375.7 L333.8 375.2 L333.2 373.1 L332.6 373.0 L332.0 375.1 L331.4 374.6Z" fill="#ffff00"/>
<path d="M348.2 364.7 L348.8 365.9 L349.4 365.0 L350.0 365.2 L350.6 365.2 L351.2 364.8 L351.8 364.2 L352.4 363.6 L353.0 364.4 L353.6 366.2 L354.2 364.2 L354.8 365.5 L355.4 364.5 L356.0 364.8 L356.6 364.3 L357.2 365.8 L357.8 363.8 L358.4 366.4 L359.0 365.7 L359.6 364.7 L360.2 364.9 L360.8 366.3 L361.4 364.9 L362.0 365.4 L362.6 365.9 L363.2 364.3 L363.8 366.3 L364.4 364.1 L365.0 364.3 L365.6 365.3 L366.2 364.1 L366.8 364.6 L367.4 365.6 L368.0 364.3 L368.6 365.3 L369.2 366.3 L369.8 366.3 L370.4 364.9 L371.0 364.5 L371.6 364.2 L372.2 365.9 L372.8 366.3 L373.4 364.4 L373.4 375.0 L372.8 373.9 L372.2 374.9 L371.6 373.2 L371.0 373.9 L370.4 374.4 L369.8 373.2 L369.2 375.6 L368.6 374.1 L368.0 375.7 L367.4 374.6 L366.8 375.9 L366.2 374.1 L365.6 373.7 L365.0 373.6 L364.4 374.8 L363.8 373.3 L363.2 375.5 L362.6 374.0 L362.0 374.4 L361.4 374.9 L360.8 375.0 L360.2 373.2 L359.6 373.3 L359.0 374.2 L358.4 373.1 L357.8 375.6 L357.2 375.9 L356.6 373.5 L356.0 374.9 L355.4 374.7 L354.8 373.8 L354.2 374.8 L353.6 375.6 L353.0 373.7 L352.4 375.8 L351.8 374.6 L351.2 374.2 L350.6 373.7 L350.0 375.0 L349.4 373.3 L348.8 373.1 L348.2 374.3Z" fill="#ffff00"/>
<path d="M390.2 365.7 L390.8 365.5 L391.4 365.5 L392.0 364.4 L392.6 363.8 L393.2 363.8 L393.8 364.2 L394.4 365.6 L395.0 363.8 L395.6 365.8 L396.2 365.5 L396.8 365.4 L397.4 366.0 L398.0 364.2 L398.6 364.1 L399.2 366.0 L399.8 363.9 L400.4 366.5 L401.0 364.9 L401.6 363.7 L402.2 364.1 L402.8 364.9 L403.4 366.3 L404.0 364.3 L404.6 366.3 L405.2 366.1 L405.8 364.6 L406.4 365.9 L407.0 365.0 L407.0 375.3 L406.4 375.3 L405.8 373.7 L405.2 375.2 L404.6 374.9 L404.0 375.7 L403.4 373.2 L402.8 375.3 L402.2 373.2 L401.6 374.9 L401.0 374.7 L400.4 374.5 L399.8 373.8 L399.2 375.2 L398.6 374.6 L398.0 374.6 L397.4 374.7 L396.8 374.1 L396.2 374.0 L395.6 374.0 L395.0 375.6 L394.4 374.2 L393.8 373.9 L393.2 374.3 L392.6 375.8 L392.0 374.7 L391.4 373.3 L390.8 375.1 L390.2 373.4Z" fill="#ffff00"/>
<path d="M415.4 365.4 L416.0 363.7 L416.6 365.1 L417.2 364.4 L417.8 363.8 L418.4 364.1 L419.0 364.0 L419.6 364.1 L420.2 363.7 L420.8 365.0 L421.4 364.2 L422.0 365.3 L422.6 364.3 L423.2 365.4 L423.8 365.9 L424.4 365.7 L425.0 366.4 L425.6 366.2 L426.2 364.2 L426.8 366.4 L427.4 364.8 L428.0 366.5 L428.6 366.0 L429.2 365.9 L429.8 364.8 L430.4 366.0 L431.0 366.0 L431.6 365.6 L432.2 364.1 L432.8 365.8 L433.4 363.8 L434.0 364.9 L434.6 365.1 L435.2 366.4 L435.8 364.2 L436.4 365.0 L437.0 365.7 L437.6 364.6 L438.2 366.5 L438.8 365.4 L439.4 364.4 L440.0 366.1 L440.6 365.6 L440.6 373.7 L440.0 373.4 L439.4 374.8 L438.8 375.4 L438.2 374.4 L437.6 373.7 L437.0 375.9 L436.4 374.5 L435.8 374.1 L435.2 375.8 L434.6 373.6 L434.0 375.8 L433.4 374.0 L432.8 375.6 L432.2 374.4 L431.6 374.6 L431.0 375.2 L430.4 373.8 L429.8 373.6 L429.2 375.1 L428.6 373.6 L428.0 373.3 L427.4 375.7 L426.8 374.3 L426.2 373.5 L425.6 374.9 L425.0 373.9 L424.4 375.9 L423.8 374.2 L423.2 373.5 L422.6 375.9 L422.0 373.4 L421.4 374.2 L420.8 375.1 L420.2 374.9 L419.6 375.6 L419.0 375.4 L418.4 375.0 L417.8 374.2 L417.2 375.1 L416.6 374.6 L416.0 375.0 L415.4 374.0Z" fill="#ffff00"/>
<path d="M449.0 364.0 L449.6 364.6 L450.2 365.8 L450.8 366.1 L451.4 366.6 L452.0 364.0 L452.6 366.3 L453.2 364.4 L453.8 365.1 L454.4 363.7 L455.0 364.0 L455.6 364.2 L456.2 363.8 L456.8 364.1 L457.4 364.9 L457.4 374.5 L456.8 373.6 L456.2 373.2 L455.6 374.2 L455.0 373.9 L454.4 374.7 L453.8 374.4 L453.2 373.3 L452.6 373.8 L452.0 375.4 L451.4 375.4 L450.8 375.3 L450.2 374.6 L449.6 375.9 L449.0 374.5Z" fill="#ffff00"/>
<path d="M474.2 366.1 L474.8 365.6 L475.4 366.3 L476.0 365.2 L476.6 365.5 L477.2 366.2 L477.8 365.2 L478.4 364.1 L479.0 366.5 L479.6 364.4 L480.2 364.9 L480.8 366.5 L481.4 364.2 L482.0 364.7 L482.6 365.4 L482.6 374.6 L482.0 373.8 L481.4 373.6 L480.8 375.9 L480.2 374.3 L479.6 373.7 L479.0 374.1 L478.4 374.9 L477.8 375.9 L477.2 374.1 L476.6 375.0 L476.0 375.1 L475.4 373.9 L474.8 373.9 L474.2 375.5Z" fill="#ffff00"/>
<path d="M491.0 365.7 L491.6 365.4 L492.2 365.8 L492.8 364.4 L493.4 363.7 L494.0 364.4 L494.6 364.1 L495.2 366.1 L495.8 364.5 L496.4 366.0 L497.0 364.0 L497.6 366.3 L498.2 366.1 L498.8 365.3 L499.4 363.8 L500.0 365.0 L500.6 364.3 L501.2 365.4 L501.8 365.3 L502.4 365.4 L503.0 363.6 L503.6 364.6 L504.2 366.5 L504.8 365.5 L505.4 366.2 L506.0 365.0 L506.6 364.1 L507.2 366.1 L507.8 363.9 L508.4 365.5 L509.0 366.1 L509.6 363.6 L510.2 364.4 L510.8 366.0 L511.4 364.7 L512.0 366.3 L512.6 364.8 L513.2 365.6 L513.8 365.5 L514.4 366.2 L515.0 366.2 L515.6 364.9 L516.2 364.9 L516.8 363.8 L517.4 364.1 L518.0 366.2 L518.6 365.7 L519.2 365.8 L519.8 364.1 L520.4 364.9 L521.0 366.5 L521.6 363.6 L522.2 364.6 L522.8 364.5 L523.4 365.4 L524.0 364.1 L524.6 366.0 L525.2 366.1 L525.8 364.9 L526.4 365.0 L527.0 364.9 L527.6 364.6 L528.2 364.5 L528.8 363.7 L529.4 365.2 L530.0 364.7 L530.6 364.3 L531.2 365.1 L531.8 364.0 L532.4 365.3 L533.0 364.9 L533.6 365.0 L534.2 365.3 L534.8 365.6 L535.4 364.4 L536.0 364.4 L536.6 364.3 L537.2 364.8 L537.8 366.2 L538.4 365.1 L539.0 366.4 L539.6 365.0 L540.2 365.6 L540.8 365.9 L541.4 363.8 L542.0 364.6 L542.6 365.3 L543.2 365.9 L543.8 364.9 L544.4 366.3 L545.0 366.2 L545.6 363.7 L546.2 365.8 L546.8 365.6 L547.4 363.9 L548.0 365.4 L548.6 364.8 L549.2 366.5 L549.8 365.6 L550.4 363.8 L551.0 365.1 L551.6 365.7 L552.2 363.9 L552.8 364.0 L553.4 365.1 L554.0 363.9 L554.6 366.0 L555.2 366.0 L555.8 366.4 L556.4 364.4 L557.0 363.9 L557.6 364.4 L558.2 364.5 L558.8 365.2 L559.4 365.9 L560.0 364.4 L560.6 366.0 L561.2 364.6 L561.8 365.4 L562.4 363.9 L563.0 365.9 L563.6 363.8 L564.2 365.7 L564.8 366.3 L565.4 365.2 L566.0 365.0 L566.6 364.8 L567.2 365.8 L567.8 366.3 L568.4 364.3 L569.0 365.7 L569.6 366.0 L570.2 363.6 L570.8 365.2 L571.4 365.4 L572.0 365.1 L572.6 364.9 L573.2 365.5 L573.8 364.2 L574.4 365.0 L575.0 364.5 L575.6 363.7 L576.2 364.2 L576.8 364.7 L577.4 365.2 L578.0 364.2 L578.6 365.9 L579.2 365.9 L579.8 365.1 L580.4 364.8 L581.0 364.8 L581.6 366.0 L582.2 366.5 L582.8 365.3 L583.4 365.8 L584.0 366.3 L584.6 364.9 L585.2 364.2 L585.8 366.1 L586.4 366.4 L587.0 364.7 L587.6 365.8 L588.2 366.3 L588.8 366.0 L589.4 366.1 L590.0 364.1 L590.6 366.4 L591.2 365.5 L591.8 363.6 L592.4 365.1 L593.0 363.6 L593.6 365.2 L594.2 366.4 L594.8 363.9 L595.4 365.4 L596.0 365.3 L596.6 366.5 L597.2 364.3 L597.8 365.9 L598.4 364.9 L599.0 365.2 L599.6 365.5 L600.2 363.6 L600.8 366.4 L601.4 364.6 L602.0 365.5 L602.6 364.0 L603.2 363.9 L603.8 365.4 L604.4 365.4 L605.0 365.9 L605.6 366.0 L606.2 366.1 L606.8 365.9 L607.4 365.6 L608.0 363.6 L608.6 364.0 L609.2 365.4 L609.8 364.5 L610.4 365.7 L611.0 366.0 L611.6 365.4 L612.2 364.4 L612.8 365.5 L613.4 363.8 L614.0 364.3 L614.6 363.8 L615.2 365.6 L615.8 366.3 L616.4 365.6 L617.0 365.0 L617.6 365.4 L618.2 366.4 L618.8 364.8 L619.4 365.6 L620.0 364.9 L620.6 364.4 L621.2 364.4 L621.8 366.1 L622.4 365.7 L623.0 365.3 L623.6 364.0 L624.2 365.7 L624.8 365.9 L625.4 366.5 L625.4 374.9 L624.8 373.1 L624.2 374.0 L623.6 373.6 L623.0 374.1 L622.4 375.1 L621.8 373.6 L621.2 375.0 L620.6 373.7 L620.0 373.4 L619.4 374.2 L618.8 373.1 L618.2 373.4 L617.6 373.7 L617.0 373.1 L616.4 375.3 L615.8 375.6 L615.2 374.1 L614.6 373.0 L614.0 375.1 L613.4 374.0 L612.8 373.4 L612.2 373.8 L611.6 375.7 L611.0 373.7 L610.4 373.0 L609.8 374.0 L609.2 373.2 L608.6 373.6 L608.0 375.0 L607.4 374.3 L606.8 374.4 L606.2 373.6 L605.6 374.6 L605.0 374.0 L604.4 375.3 L603.8 375.5 L603.2 374.3 L602.6 374.7 L602.0 375.0 L601.4 373.1 L600.8 374.2 L600.2 374.8 L599.6 374.0 L599.0 375.8 L598.4 373.7 L597.8 373.7 L597.2 375.2 L596.6 375.9 L596.0 373.2 L595.4 373.9 L594.8 373.4 L594.2 373.7 L593.6 375.2 L593.0 373.4 L592.4 375.2 L591.8 373.1 L591.2 373.6 L590.6 374.2 L590.0 375.3 L589.4 375.0 L588.8 373.7 L588.2 375.4 L587.6 374.7 L587.0 374.5 L586.4 373.9 L585.8 373.9 L585.2 373.7 L584.6 374.6 L584.0 375.7 L583.4 375.4 L582.8 374.3 L582.2 374.4 L581.6 373.4 L581.0 375.6 L580.4 375.1 L579.8 373.1 L579.2 374.7 L578.6 374.4 L578.0 375.3 L577.4 375.3 L576.8 373.7 L576.2 373.5 L575.6 373.5 L575.0 374.5 L574.4 375.5 L573.8 374.5 L573.2 374.9 L572.6 374.9 L572.0 373.5 L571.4 375.7 L570.8 375.2 L570.2 373.1 L569.6 375.7 L569.0 374.6 L568.4 373.7 L567.8 373.8 L567.2 375.4 L566.6 373.8 L566.0 373.1 L565.4 374.5 L564.8 375.9 L564.2 374.9 L563.6 375.0 L563.0 373.9 L562.4 374.7 L561.8 374.9 L561.2 375.3 L560.6 373.7 L560.0 373.5 L559.4 373.9 L558.8 373.2 L558.2 375.8 L557.6 373.4 L557.0 375.6 L556.4 373.9 L555.8 373.3 L555.2 375.6 L554.6 374.9 L554.0 375.9 L553.4 373.5 L552.8 374.0 L552.2 373.5 L551.6 375.7 L551.0 373.6 L550.4 375.9 L549.8 374.5 L549.2 375.7 L548.6 373.1 L548.0 374.0 L547.4 375.4 L546.8 373.1 L546.2 373.9 L545.6 373.0 L545.0 374.6 L544.4 375.3 L543.8 375.7 L543.2 375.2 L542.6 375.4 L542.0 375.6 L541.4 375.9 L540.8 373.2 L540.2 374.1 L539.6 373.7 L539.0 375.0 L538.4 374.2 L537.8 374.3 L537.2 373.2 L536.6 373.9 L536.0 374.8 L535.4 375.7 L534.8 373.1 L534.2 375.7 L533.6 374.5 L533.0 375.7 L532.4 374.3 L531.8 375.5 L531.2 375.9 L530.6 375.2 L530.0 375.0 L529.4 374.2 L528.8 374.8 L528.2 373.4 L527.6 373.1 L527.0 374.0 L526.4 373.8 L525.8 373.5 L525.2 374.1 L524.6 374.4 L524.0 373.0 L523.4 374.7 L522.8 375.2 L522.2 373.9 L521.6 375.8 L521.0 373.5 L520.4 373.2 L519.8 373.5 L519.2 374.7 L518.6 375.7 L518.0 375.4 L517.4 374.8 L516.8 375.9 L516.2 373.8 L515.6 374.6 L515.0 375.7 L514.4 375.9 L513.8 374.3 L513.2 375.7 L512.6 375.1 L512.0 373.7 L511.4 373.6 L510.8 375.8 L510.2 375.5 L509.6 374.5 L509.0 375.1 L508.4 374.5 L507.8 374.6 L507.2 375.3 L506.6 374.8 L506.0 375.3 L505.4 374.1 L504.8 374.9 L504.2 374.0 L503.6 374.8 L503.0 375.3 L502.4 375.1 L501.8 373.0 L501.2 374.0 L500.6 375.4 L500.0 374.9 L499.4 374.2 L498.8 373.2 L498.2 373.3 L497.6 373.6 L497.0 374.7 L496.4 374.2 L495.8 375.1 L495.2 373.2 L494.6 373.2 L494.0 374.0 L493.4 374.6 L492.8 373.9 L492.2 373.6 L491.6 375.0 L491.0 374.0Z" fill="#ffff00"/>
<path d="M113.0 313.4 L113.6 312.2 L114.2 313.1 L114.8 314.4 L115.4 313.1 L116.0 312.5 L116.6 313.2 L117.2 313.8 L117.8 314.9 L118.4 314.1 L119.0 314.2 L119.6 313.9 L120.2 314.6 L120.8 314.4 L121.4 314.1 L122.0 314.6 L122.6 313.0 L123.2 313.0 L123.8 313.9 L124.4 314.9 L125.0 314.9 L125.6 313.3 L126.2 314.1 L126.8 315.0 L127.4 312.4 L128.0 314.3 L128.6 314.5 L129.2 313.2 L129.8 314.0 L130.4 312.3 L131.0 313.2 L131.6 313.8 L132.2 314.3 L132.8 312.4 L133.4 312.4 L134.0 314.7 L134.6 314.2 L135.2 312.1 L135.8 314.5 L136.4 313.0 L137.0 315.1 L137.6 313.9 L138.2 313.6 L138.2 323.0 L137.6 321.8 L137.0 322.7 L136.4 321.8 L135.8 321.8 L135.2 321.5 L134.6 322.2 L134.0 322.6 L133.4 321.2 L132.8 322.2 L132.2 323.6 L131.6 322.3 L131.0 322.9 L130.4 323.4 L129.8 322.8 L129.2 323.9 L128.6 322.5 L128.0 323.1 L127.4 322.8 L126.8 322.1 L126.2 321.8 L125.6 322.5 L125.0 322.6 L124.4 322.3 L123.8 322.2 L123.2 321.1 L122.6 322.7 L122.0 322.8 L121.4 322.3 L120.8 321.4 L120.2 323.1 L119.6 322.5 L119.0 321.6 L118.4 322.6 L117.8 322.2 L117.2 322.3 L116.6 321.3 L116.0 321.8 L115.4 323.9 L114.8 323.1 L114.2 323.8 L113.6 322.0 L113.0 323.5Z" fill="#ffff00"/>
<path d="M146.6 313.4 L147.2 313.4 L147.8 312.2 L148.4 314.0 L149.0 314.1 L149.6 313.0 L150.2 312.2 L150.8 314.6 L151.4 313.6 L152.0 314.0 L152.6 312.8 L153.2 314.4 L153.8 314.1 L154.4 313.5 L155.0 314.9 L155.0 321.3 L154.4 321.5 L153.8 321.6 L153.2 321.8 L152.6 322.7 L152.0 321.9 L151.4 322.8 L150.8 322.9 L150.2 323.6 L149.6 323.1 L149.0 323.2 L148.4 323.7 L147.8 322.1 L147.2 323.6 L146.6 323.0Z" fill="#ffff00"/>
<path d="M180.2 314.8 L180.8 314.7 L181.4 312.8 L182.0 314.6 L182.6 312.5 L183.2 314.3 L183.8 312.7 L184.4 312.9 L185.0 312.9 L185.6 314.1 L186.2 312.6 L186.8 313.4 L187.4 313.0 L188.0 312.6 L188.6 314.7 L189.2 313.1 L189.8 314.5 L190.4 313.3 L191.0 312.2 L191.6 313.0 L192.2 313.2 L192.8 312.3 L193.4 314.9 L194.0 314.7 L194.6 314.2 L195.2 312.1 L195.8 314.1 L196.4 313.5 L197.0 314.0 L197.0 322.0 L196.4 322.5 L195.8 321.2 L195.2 321.4 L194.6 323.3 L194.0 321.2 L193.4 323.2 L192.8 324.0 L192.2 322.3 L191.6 322.3 L191.0 321.5 L190.4 323.9 L189.8 321.1 L189.2 321.8 L188.6 322.2 L188.0 323.5 L187.4 322.9 L186.8 322.3 L186.2 323.6 L185.6 323.4 L185.0 322.1 L184.4 321.8 L183.8 322.3 L183.2 322.6 L182.6 321.2 L182.0 323.7 L181.4 322.5 L180.8 322.4 L180.2 323.2Z" fill="#ffff00"/>
<path d="M213.8 312.7 L214.4 314.2 L215.0 313.2 L215.6 312.1 L216.2 313.0 L216.8 312.7 L217.4 314.6 L218.0 312.3 L218.6 313.6 L219.2 314.1 L219.8 313.4 L220.4 313.2 L221.0 314.4 L221.6 314.0 L222.2 314.9 L222.8 312.4 L223.4 314.8 L224.0 313.6 L224.6 314.5 L225.2 313.6 L225.8 312.7 L226.4 314.9 L227.0 313.1 L227.6 314.2 L228.2 312.5 L228.8 313.8 L229.4 312.9 L230.0 315.0 L230.6 314.7 L231.2 314.0 L231.8 314.1 L232.4 315.0 L233.0 312.2 L233.6 313.5 L234.2 312.7 L234.8 313.9 L235.4 312.6 L236.0 312.1 L236.6 312.2 L237.2 313.0 L237.8 312.4 L238.4 313.3 L239.0 313.9 L239.6 313.1 L240.2 314.0 L240.8 314.0 L241.4 312.4 L242.0 314.8 L242.6 312.9 L243.2 312.9 L243.8 313.0 L244.4 314.8 L245.0 314.0 L245.6 315.1 L246.2 313.9 L246.8 313.5 L247.4 314.5 L248.0 314.1 L248.6 314.8 L249.2 313.8 L249.8 314.4 L250.4 313.0 L251.0 314.3 L251.6 312.2 L252.2 314.5 L252.8 312.1 L253.4 313.2 L254.0 313.1 L254.6 313.2 L255.2 312.5 L255.8 313.6 L255.8 322.8 L255.2 323.0 L254.6 323.7 L254.0 321.7 L253.4 322.2 L252.8 321.5 L252.2 322.2 L251.6 322.0 L251.0 323.1 L250.4 321.6 L249.8 322.3 L249.2 324.0 L248.6 324.0 L248.0 323.3 L247.4 323.7 L246.8 323.9 L246.2 322.0 L245.6 322.6 L245.0 322.4 L244.4 321.5 L243.8 321.6 L243.2 322.7 L242.6 321.7 L242.0 322.1 L241.4 322.0 L240.8 321.9 L240.2 323.0 L239.6 323.5 L239.0 322.2 L238.4 321.8 L237.8 321.2 L237.2 321.8 L236.6 322.3 L236.0 321.4 L235.4 323.4 L234.8 323.5 L234.2 323.3 L233.6 323.5 L233.0 321.1 L232.4 321.7 L231.8 322.6 L231.2 323.3 L230.6 321.3 L230.0 321.6 L229.4 321.6 L228.8 323.6 L228.2 324.1 L227.6 323.9 L227.0 322.9 L226.4 322.7 L225.8 322.3 L225.2 322.3 L224.6 323.7 L224.0 324.1 L223.4 321.6 L222.8 322.0 L222.2 321.3 L221.6 321.9 L221.0 322.5 L220.4 321.9 L219.8 321.5 L219.2 321.1 L218.6 321.4 L218.0 321.8 L217.4 321.4 L216.8 321.5 L216.2 322.7 L215.6 322.2 L215.0 323.4 L214.4 322.3 L213.8 323.6Z" fill="#ffff00"/>
<path d="M264.2 314.7 L264.8 313.0 L265.4 313.1 L266.0 313.9 L266.6 313.3 L267.2 313.5 L267.8 313.2 L268.4 313.3 L269.0 312.3 L269.6 313.7 L270.2 312.9 L270.8 312.9 L271.4 313.9 L272.0 314.7 L272.6 313.6 L272.6 321.8 L272.0 324.1 L271.4 323.7 L270.8 324.0 L270.2 322.0 L269.6 324.1 L269.0 321.5 L268.4 322.9 L267.8 322.4 L267.2 321.2 L266.6 322.8 L266.0 321.8 L265.4 322.3 L264.8 322.4 L264.2 323.6Z" fill="#ffff00"/>
<path d="M289.4 312.6 L290.0 312.3 L290.6 312.7 L291.2 312.1 L291.8 312.5 L292.4 314.3 L293.0 313.7 L293.6 312.5 L294.2 314.2 L294.8 314.9 L295.4 312.7 L296.0 314.4 L296.6 312.5 L297.2 313.4 L297.8 312.7 L297.8 321.5 L297.2 323.8 L296.6 323.4 L296.0 323.5 L295.4 322.6 L294.8 322.7 L294.2 323.0 L293.6 321.7 L293.0 322.7 L292.4 323.5 L291.8 323.2 L291.2 321.3 L290.6 322.6 L290.0 323.6 L289.4 323.0Z" fill="#ffff00"/>
<path d="M306.2 314.0 L306.8 315.0 L307.4 312.5 L308.0 314.7 L308.6 313.9 L309.2 313.2 L309.8 314.9 L310.4 314.5 L311.0 312.5 L311.6 314.5 L312.2 313.8 L312.8 314.1 L313.4 313.2 L314.0 313.3 L314.6 314.5 L314.6 321.5 L314.0 323.2 L313.4 321.9 L312.8 322.0 L312.2 321.1 L311.6 323.1 L311.0 323.3 L310.4 323.0 L309.8 324.0 L309.2 323.8 L308.6 323.6 L308.0 321.6 L307.4 323.6 L306.8 322.1 L306.2 321.4Z" fill="#ffff00"/>
<path d="M323.0 313.0 L323.6 314.7 L324.2 312.3 L324.8 314.0 L325.4 312.1 L326.0 312.9 L326.6 314.1 L327.2 314.6 L327.8 313.8 L328.4 313.9 L329.0 313.6 L329.6 314.0 L330.2 314.4 L330.8 314.2 L331.4 314.2 L331.4 323.6 L330.8 323.7 L330.2 322.8 L329.6 323.2 L329.0 323.9 L328.4 322.5 L327.8 323.5 L327.2 323.0 L326.6 322.3 L326.0 322.2 L325.4 323.2 L324.8 321.7 L324.2 322.9 L323.6 321.4 L323.0 322.5Z" fill="#ffff00"/>
<path d="M339.8 313.0 L340.4 312.3 L341.0 312.9 L341.6 313.7 L342.2 313.8 L342.8 313.8 L343.4 314.2 L344.0 313.1 L344.6 313.8 L345.2 312.4 L345.8 313.8 L346.4 312.6 L347.0 313.3 L347.6 314.8 L348.2 314.8 L348.2 322.2 L347.6 323.8 L347.0 322.7 L346.4 323.6 L345.8 322.1 L345.2 321.8 L344.6 321.5 L344.0 321.8 L343.4 323.2 L342.8 323.9 L342.2 321.9 L341.6 321.3 L341.0 322.9 L340.4 322.2 L339.8 322.4Z" fill="#ffff00"/>
<path d="M373.4 314.0 L374.0 313.1 L374.6 312.4 L375.2 315.0 L375.8 313.7 L376.4 313.7 L377.0 313.1 L377.6 312.2 L378.2 312.1 L378.8 312.6 L379.4 313.0 L380.0 314.9 L380.6 313.9 L381.2 314.4 L381.8 314.5 L382.4 314.7 L383.0 312.9 L383.6 314.6 L384.2 313.2 L384.8 314.3 L385.4 312.9 L386.0 314.7 L386.6 315.0 L387.2 312.2 L387.8 315.0 L388.4 313.5 L389.0 314.7 L389.6 314.2 L390.2 314.7 L390.2 322.8 L389.6 322.6 L389.0 323.4 L388.4 322.7 L387.8 322.1 L387.2 323.8 L386.6 323.7 L386.0 322.5 L385.4 323.4 L384.8 323.5 L384.2 323.3 L383.6 323.0 L383.0 321.3 L382.4 322.3 L381.8 322.2 L381.2 324.0 L380.6 323.0 L380.0 322.5 L379.4 324.1 L378.8 323.0 L378.2 322.3 L377.6 324.0 L377.0 322.9 L376.4 322.0 L375.8 322.2 L375.2 323.0 L374.6 323.9 L374.0 322.1 L373.4 323.2Z" fill="#ffff00"/>
<path d="M407.0 314.7 L407.6 313.5 L408.2 312.7 L408.8 313.8 L409.4 314.4 L410.0 313.4 L410.6 312.5 L411.2 312.5 L411.8 312.2 L412.4 313.9 L413.0 312.5 L413.6 313.8 L414.2 314.6 L414.8 312.9 L415.4 314.6 L415.4 322.7 L414.8 323.2 L414.2 323.5 L413.6 321.1 L413.0 324.0 L412.4 322.9 L411.8 322.7 L411.2 321.5 L410.6 321.4 L410.0 322.5 L409.4 322.4 L408.8 321.2 L408.2 321.8 L407.6 322.0 L407.0 321.3Z" fill="#ffff00"/>
<path d="M440.6 315.0 L441.2 314.2 L441.8 313.2 L442.4 314.9 L443.0 314.8 L443.6 314.7 L444.2 314.1 L444.8 313.1 L445.4 312.2 L446.0 313.6 L446.6 313.9 L447.2 312.9 L447.8 314.0 L448.4 313.6 L449.0 313.8 L449.0 322.4 L448.4 322.2 L447.8 322.4 L447.2 321.9 L446.6 322.0 L446.0 323.8 L445.4 322.8 L444.8 323.7 L444.2 322.5 L443.6 323.8 L443.0 321.9 L442.4 322.3 L441.8 323.6 L441.2 324.0 L440.6 321.4Z" fill="#ffff00"/>
<path d="M457.4 314.9 L458.0 314.9 L458.6 313.4 L459.2 314.4 L459.8 314.0 L460.4 313.6 L461.0 312.8 L461.6 315.1 L462.2 312.2 L462.8 313.3 L463.4 314.0 L464.0 314.0 L464.6 313.3 L465.2 314.1 L465.8 313.5 L466.4 314.9 L467.0 314.3 L467.6 312.7 L468.2 312.5 L468.8 314.2 L469.4 314.8 L470.0 312.6 L470.6 314.1 L471.2 312.7 L471.8 314.9 L472.4 314.9 L473.0 313.4 L473.6 313.2 L474.2 312.3 L474.2 323.3 L473.6 321.1 L473.0 323.9 L472.4 323.0 L471.8 323.4 L471.2 323.0 L470.6 323.5 L470.0 322.1 L469.4 324.0 L468.8 323.1 L468.2 322.3 L467.6 322.4 L467.0 321.9 L466.4 321.4 L465.8 323.3 L465.2 322.6 L464.6 322.8 L464.0 322.0 L463.4 322.9 L462.8 324.0 L462.2 321.1 L461.6 322.3 L461.0 322.5 L460.4 321.8 L459.8 322.0 L459.2 321.4 L458.6 322.3 L458.0 322.7 L457.4 323.6Z" fill="#ffff00"/>
<path d="M482.6 313.3 L483.2 312.9 L483.8 313.0 L484.4 312.3 L485.0 312.7 L485.6 312.8 L486.2 313.7 L486.8 314.7 L487.4 312.9 L488.0 314.7 L488.6 313.1 L489.2 314.7 L489.8 314.1 L490.4 313.4 L491.0 314.4 L491.0 322.3 L490.4 323.8 L489.8 323.9 L489.2 321.4 L488.6 322.7 L488.0 323.6 L487.4 321.3 L486.8 322.0 L486.2 322.4 L485.6 322.2 L485.0 322.4 L484.4 321.3 L483.8 324.0 L483.2 322.3 L482.6 321.1Z" fill="#ffff00"/>
<path d="M113.0 369.8V318.1 M138.2 318.1V369.8" stroke="#ffff00" stroke-width="1"/>
<path d="M146.6 369.8V318.1 M155.0 318.1V369.8" stroke="#ffff00" stroke-width="1"/>
<path d="M180.2 369.8V318.1 M197.0 318.1V369.8" stroke="#ffff00" stroke-width="1"/>
<path d="M213.8 369.8V318.1 M255.8 318.1V369.8" stroke="#ffff00" stroke-width="1"/>
<path d="M264.2 369.8V318.1 M272.6 318.1V369.8" stroke="#ffff00" stroke-width="1"/>
<path d="M289.4 369.8V318.1 M297.8 318.1V369.8" stroke="#ffff00" stroke-width="1"/>
<path d="M306.2 369.8V318.1 M314.6 318.1V369.8" stroke="#ffff00" stroke-width="1"/>
<path d="M323.0 369.8V318.1 M331.4 318.1V369.8" stroke="#ffff00" stroke-width="1"/>
<path d="M339.8 369.8V318.1 M348.2 318.1V369.8" stroke="#ffff00" stroke-width="1"/>
<path d="M373.4 369.8V318.1 M390.2 318.1V369.8" stroke="#ffff00" stroke-width="1"/>
<path d="M407.0 369.8V318.1 M415.4 318.1V369.8" stroke="#ffff00" stroke-width="1"/>
<path d="M440.6 369.8V318.1 M449.0 318.1V369.8" stroke="#ffff00" stroke-width="1"/>
<path d="M457.4 369.8V318.1 M474.2 318.1V369.8" stroke="#ffff00" stroke-width="1"/>
<path d="M482.6 369.8V318.1 M491.0 318.1V369.8" stroke="#ffff00" stroke-width="1"/>
<path d="M45.3 300.6 L45.9 301.1 L46.5 299.3 L47.1 298.9 L47.7 298.9 L48.3 300.2 L48.9 301.2 L49.5 302.8 L50.1 303.4 L50.7 304.0 L51.3 304.6 L51.9 302.6 L52.5 302.5 L53.1 300.4 L53.7 300.4 L54.3 298.5 L54.9 298.6 L55.5 299.4 L56.1 299.2 L56.7 301.5 L57.3 301.3 L57.9 301.9 L58.5 302.2 L59.1 301.9 L59.7 303.7 L60.3 302.1 L60.9 302.7 L61.5 302.8 L62.1 300.5 L62.7 300.4 L63.3 297.8 L63.9 297.8 L64.5 298.6 L65.1 301.1 L65.7 300.6 L66.3 300.9 L66.9 301.2 L67.5 302.6 L68.1 302.3 L68.7 303.5 L69.3 301.5 L69.9 302.1 L70.5 300.5 L71.1 300.5 L71.7 300.3 L72.3 299.4 L72.9 300.1 L73.5 299.1 L74.1 299.8 L74.7 301.3 L75.3 301.7 L75.9 302.7 L76.5 302.8 L77.1 304.2 L77.7 302.5 L78.3 302.2 L78.9 301.0 L79.5 298.6 L80.1 299.0 L80.7 299.5 L81.3 300.6 L81.9 299.7 L82.5 299.7 L83.1 301.5 L83.7 300.9 L84.3 302.0 L84.9 303.1 L85.5 304.3 L86.1 300.7 L86.7 300.3 L87.3 300.6 L87.9 299.8 L88.5 299.1 L89.1 298.7 L89.7 298.8 L90.3 300.2 L90.9 301.0 L91.5 300.3 L92.1 303.5 L92.7 303.7 L93.3 302.3 L93.9 301.5 L94.5 301.1 L95.1 302.8 L95.7 300.4 L96.3 299.6 L96.9 297.9 L97.5 298.6 L98.1 300.9 L98.7 299.1 L99.3 302.4 L99.9 300.7 L100.5 302.4 L101.1 302.4 L101.7 305.1 L102.3 302.0 L102.9 301.1 L103.5 301.9 L104.1 302.1 L104.7 300.6 L105.3 299.1 L105.9 298.2 L106.5 300.2 L107.1 301.2 L107.7 301.7 L108.3 300.8 L108.9 303.2 L109.5 303.9 L110.1 304.3 L110.7 303.8 L111.3 302.7 L111.9 300.7 L112.5 299.8 L112.5 308.8 L111.9 309.9 L111.3 309.6 L110.7 310.1 L110.1 312.7 L109.5 311.2 L108.9 310.9 L108.3 309.2 L107.7 308.9 L107.1 307.1 L106.5 308.6 L105.9 306.6 L105.3 306.7 L104.7 308.2 L104.1 309.5 L103.5 308.9 L102.9 309.8 L102.3 312.3 L101.7 310.3 L101.1 312.1 L100.5 310.7 L99.9 310.2 L99.3 307.5 L98.7 309.6 L98.1 306.3 L97.5 308.1 L96.9 305.9 L96.3 308.2 L95.7 309.2 L95.1 309.4 L94.5 311.4 L93.9 312.1 L93.3 313.0 L92.7 311.8 L92.1 309.8 L91.5 309.9 L90.9 309.1 L90.3 306.9 L89.7 307.2 L89.1 305.8 L88.5 306.7 L87.9 307.0 L87.3 307.4 L86.7 310.2 L86.1 310.7 L85.5 311.1 L84.9 310.3 L84.3 309.8 L83.7 309.8 L83.1 308.5 L82.5 307.7 L81.9 306.9 L81.3 308.8 L80.7 308.0 L80.1 306.7 L79.5 307.9 L78.9 309.3 L78.3 309.3 L77.7 311.0 L77.1 312.2 L76.5 310.9 L75.9 312.4 L75.3 310.5 L74.7 309.8 L74.1 310.0 L73.5 307.2 L72.9 307.5 L72.3 306.1 L71.7 307.1 L71.1 307.2 L70.5 307.9 L69.9 308.0 L69.3 309.4 L68.7 312.0 L68.1 312.3 L67.5 310.7 L66.9 311.7 L66.3 309.9 L65.7 307.8 L65.1 308.3 L64.5 306.6 L63.9 305.5 L63.3 308.0 L62.7 306.9 L62.1 308.8 L61.5 310.0 L60.9 311.2 L60.3 309.7 L59.7 310.8 L59.1 311.0 L58.5 311.8 L57.9 310.0 L57.3 309.6 L56.7 309.1 L56.1 306.7 L55.5 307.4 L54.9 306.4 L54.3 307.4 L53.7 308.6 L53.1 309.0 L52.5 310.4 L51.9 311.0 L51.3 311.2 L50.7 310.7 L50.1 310.7 L49.5 310.4 L48.9 309.7 L48.3 308.7 L47.7 308.7 L47.1 306.3 L46.5 305.8 L45.9 309.0 L45.3 309.7Z" fill="#ff0000"/>
<path d="M138.2 301.3 L138.8 300.0 L139.4 298.9 L140.0 299.7 L140.6 298.9 L141.2 301.2 L141.8 300.7 L142.4 302.8 L143.0 303.4 L143.6 303.4 L144.2 303.0 L144.8 303.7 L145.4 301.8 L146.0 299.5 L146.6 300.9 L146.6 309.1 L146.0 307.7 L145.4 308.2 L144.8 310.2 L144.2 311.9 L143.6 312.4 L143.0 310.4 L142.4 311.2 L141.8 310.4 L141.2 307.7 L140.6 309.6 L140.0 306.9 L139.4 308.1 L138.8 306.4 L138.2 308.8Z" fill="#ff0000"/>
<path d="M155.0 298.6 L155.6 299.7 L156.2 299.7 L156.8 298.0 L157.4 301.2 L158.0 299.7 L158.6 300.2 L159.2 302.7 L159.8 303.7 L160.4 305.0 L161.0 303.4 L161.6 302.8 L162.2 302.6 L162.8 300.6 L163.4 299.2 L164.0 297.9 L164.6 299.4 L165.2 299.9 L165.8 298.8 L166.4 301.9 L167.0 301.4 L167.6 301.4 L168.2 303.2 L168.8 302.7 L169.4 303.9 L170.0 300.8 L170.6 300.7 L171.2 302.1 L171.8 301.0 L172.4 300.1 L173.0 299.5 L173.6 299.4 L174.2 300.2 L174.8 302.3 L175.4 303.0 L176.0 302.0 L176.6 303.2 L177.2 304.3 L177.8 301.8 L178.4 302.5 L179.0 301.6 L179.6 299.5 L180.2 298.7 L180.2 309.0 L179.6 307.9 L179.0 309.0 L178.4 310.3 L177.8 311.2 L177.2 311.3 L176.6 311.4 L176.0 309.9 L175.4 308.9 L174.8 308.3 L174.2 307.1 L173.6 307.8 L173.0 307.5 L172.4 305.8 L171.8 308.7 L171.2 307.7 L170.6 309.2 L170.0 308.8 L169.4 312.3 L168.8 311.6 L168.2 311.4 L167.6 311.7 L167.0 309.0 L166.4 308.3 L165.8 308.1 L165.2 308.1 L164.6 305.3 L164.0 306.0 L163.4 308.1 L162.8 308.9 L162.2 309.6 L161.6 309.3 L161.0 309.6 L160.4 310.8 L159.8 312.4 L159.2 309.2 L158.6 309.4 L158.0 309.5 L157.4 308.6 L156.8 306.4 L156.2 307.3 L155.6 308.5 L155.0 309.3Z" fill="#ff0000"/>
<path d="M197.0 298.8 L197.6 299.2 L198.2 299.3 L198.8 298.7 L199.4 299.9 L200.0 299.5 L200.6 302.8 L201.2 302.8 L201.8 303.1 L202.4 303.6 L203.0 304.4 L203.6 302.9 L204.2 301.1 L204.8 301.9 L205.4 300.0 L206.0 297.8 L206.6 298.8 L207.2 298.5 L207.8 299.1 L208.4 301.6 L209.0 301.6 L209.6 302.2 L210.2 303.1 L210.8 304.3 L211.4 302.9 L212.0 303.1 L212.6 300.5 L213.2 299.3 L213.8 299.4 L213.8 308.9 L213.2 310.0 L212.6 310.4 L212.0 309.3 L211.4 310.5 L210.8 312.7 L210.2 311.0 L209.6 311.7 L209.0 309.4 L208.4 310.1 L207.8 309.0 L207.2 306.6 L206.6 305.4 L206.0 306.6 L205.4 308.4 L204.8 308.7 L204.2 309.3 L203.6 310.4 L203.0 310.9 L202.4 311.3 L201.8 312.4 L201.2 310.5 L200.6 310.2 L200.0 308.2 L199.4 307.1 L198.8 306.6 L198.2 305.6 L197.6 308.7 L197.0 307.0Z" fill="#ff0000"/>
<path d="M255.8 299.3 L256.4 298.3 L257.0 297.7 L257.6 300.2 L258.2 301.6 L258.8 301.4 L259.4 301.3 L260.0 301.1 L260.6 304.4 L261.2 304.8 L261.8 301.8 L262.4 303.1 L263.0 300.7 L263.6 300.3 L264.2 299.3 L264.2 306.6 L263.6 307.6 L263.0 310.9 L262.4 310.8 L261.8 310.4 L261.2 313.1 L260.6 311.6 L260.0 310.8 L259.4 310.9 L258.8 309.8 L258.2 308.2 L257.6 308.7 L257.0 306.1 L256.4 306.2 L255.8 308.9Z" fill="#ff0000"/>
<path d="M272.6 298.8 L273.2 298.3 L273.8 298.5 L274.4 299.0 L275.0 300.5 L275.6 302.3 L276.2 300.7 L276.8 301.9 L277.4 302.5 L278.0 304.2 L278.6 303.9 L279.2 301.6 L279.8 301.9 L280.4 299.5 L281.0 298.6 L281.6 297.8 L282.2 299.2 L282.8 299.3 L283.4 301.5 L284.0 300.8 L284.6 300.9 L285.2 303.3 L285.8 303.9 L286.4 304.9 L287.0 303.3 L287.6 300.8 L288.2 301.7 L288.8 301.5 L289.4 298.6 L289.4 306.8 L288.8 308.6 L288.2 309.1 L287.6 310.6 L287.0 311.0 L286.4 310.3 L285.8 310.6 L285.2 310.6 L284.6 308.9 L284.0 308.8 L283.4 309.2 L282.8 307.4 L282.2 306.0 L281.6 308.0 L281.0 308.3 L280.4 308.1 L279.8 310.7 L279.2 311.5 L278.6 311.4 L278.0 311.0 L277.4 311.2 L276.8 311.2 L276.2 308.8 L275.6 307.9 L275.0 307.7 L274.4 307.4 L273.8 308.0 L273.2 308.3 L272.6 308.8Z" fill="#ff0000"/>
<path d="M297.8 300.1 L298.4 298.4 L299.0 298.2 L299.6 298.2 L300.2 300.0 L300.8 300.8 L301.4 300.8 L302.0 303.4 L302.6 303.8 L303.2 303.0 L303.8 302.1 L304.4 301.5 L305.0 301.6 L305.6 300.7 L306.2 298.8 L306.2 306.6 L305.6 310.0 L305.0 308.2 L304.4 310.0 L303.8 311.3 L303.2 311.1 L302.6 311.8 L302.0 310.5 L301.4 308.3 L300.8 308.0 L300.2 309.6 L299.6 306.7 L299.0 308.0 L298.4 307.4 L297.8 308.5Z" fill="#ff0000"/>
<path d="M314.6 301.2 L315.2 298.6 L315.8 299.8 L316.4 299.2 L317.0 300.5 L317.6 300.4 L318.2 303.0 L318.8 303.5 L319.4 303.2 L320.0 304.9 L320.6 303.0 L321.2 300.8 L321.8 301.4 L322.4 301.2 L323.0 301.1 L323.0 307.3 L322.4 310.1 L321.8 309.7 L321.2 311.2 L320.6 309.7 L320.0 311.3 L319.4 309.7 L318.8 309.1 L318.2 310.3 L317.6 309.3 L317.0 308.6 L316.4 308.2 L315.8 306.5 L315.2 307.0 L314.6 307.2Z" fill="#ff0000"/>
<path d="M331.4 300.8 L332.0 299.2 L332.6 299.0 L333.2 300.2 L333.8 299.5 L334.4 301.3 L335.0 301.8 L335.6 302.0 L336.2 303.7 L336.8 303.8 L337.4 301.8 L338.0 302.5 L338.6 300.0 L339.2 301.0 L339.8 299.2 L339.8 307.3 L339.2 309.2 L338.6 310.3 L338.0 311.3 L337.4 310.8 L336.8 311.6 L336.2 312.0 L335.6 310.1 L335.0 309.1 L334.4 308.7 L333.8 308.0 L333.2 308.3 L332.6 307.8 L332.0 306.9 L331.4 309.0Z" fill="#ff0000"/>
<path d="M348.2 299.2 L348.8 298.7 L349.4 298.9 L350.0 300.3 L350.6 300.1 L351.2 301.4 L351.8 303.1 L352.4 301.6 L353.0 302.8 L353.6 303.9 L354.2 303.8 L354.8 303.5 L355.4 300.4 L356.0 301.0 L356.6 299.3 L357.2 298.4 L357.8 299.4 L358.4 299.3 L359.0 298.7 L359.6 300.1 L360.2 301.0 L360.8 303.1 L361.4 303.1 L362.0 304.6 L362.6 301.7 L363.2 302.8 L363.8 301.6 L364.4 300.3 L365.0 299.8 L365.6 299.0 L366.2 299.1 L366.8 300.7 L367.4 299.6 L368.0 299.9 L368.6 302.4 L369.2 302.3 L369.8 303.5 L370.4 304.7 L371.0 301.8 L371.6 302.9 L372.2 302.5 L372.8 299.8 L373.4 300.6 L373.4 307.9 L372.8 309.4 L372.2 308.1 L371.6 309.2 L371.0 312.2 L370.4 311.1 L369.8 311.6 L369.2 309.0 L368.6 309.2 L368.0 308.6 L367.4 308.8 L366.8 306.8 L366.2 307.5 L365.6 308.5 L365.0 309.4 L364.4 308.5 L363.8 308.3 L363.2 311.1 L362.6 311.4 L362.0 312.0 L361.4 311.1 L360.8 310.6 L360.2 311.0 L359.6 308.4 L359.0 307.1 L358.4 307.6 L357.8 307.3 L357.2 307.4 L356.6 308.7 L356.0 308.9 L355.4 310.4 L354.8 310.4 L354.2 312.1 L353.6 313.1 L353.0 310.3 L352.4 309.7 L351.8 309.4 L351.2 309.6 L350.6 309.6 L350.0 308.2 L349.4 307.2 L348.8 307.7 L348.2 309.3Z" fill="#ff0000"/>
<path d="M390.2 299.3 L390.8 298.2 L391.4 299.6 L392.0 298.9 L392.6 299.1 L393.2 301.0 L393.8 301.9 L394.4 302.2 L395.0 301.7 L395.6 304.4 L396.2 303.9 L396.8 302.6 L397.4 301.6 L398.0 299.4 L398.6 300.9 L399.2 298.5 L399.8 297.6 L400.4 300.3 L401.0 301.0 L401.6 302.3 L402.2 303.0 L402.8 302.3 L403.4 304.4 L404.0 304.0 L404.6 302.6 L405.2 303.4 L405.8 302.8 L406.4 301.6 L407.0 299.4 L407.0 308.5 L406.4 307.9 L405.8 310.0 L405.2 308.9 L404.6 311.9 L404.0 313.1 L403.4 309.8 L402.8 310.7 L402.2 310.7 L401.6 309.5 L401.0 308.9 L400.4 307.1 L399.8 307.8 L399.2 306.3 L398.6 307.5 L398.0 309.2 L397.4 310.4 L396.8 309.9 L396.2 312.3 L395.6 312.0 L395.0 310.3 L394.4 310.8 L393.8 310.6 L393.2 308.4 L392.6 307.4 L392.0 307.0 L391.4 307.3 L390.8 308.2 L390.2 306.5Z" fill="#ff0000"/>
<path d="M415.4 300.4 L416.0 299.8 L416.6 299.2 L417.2 300.2 L417.8 300.9 L418.4 301.5 L419.0 302.4 L419.6 301.4 L420.2 303.1 L420.8 302.4 L421.4 302.5 L422.0 301.5 L422.6 301.6 L423.2 300.6 L423.8 299.8 L424.4 298.3 L425.0 299.6 L425.6 300.1 L426.2 299.3 L426.8 301.6 L427.4 300.6 L428.0 301.9 L428.6 302.5 L429.2 303.9 L429.8 301.7 L430.4 300.9 L431.0 302.6 L431.6 299.2 L432.2 299.8 L432.8 298.0 L433.4 297.3 L434.0 298.0 L434.6 301.3 L435.2 300.5 L435.8 301.5 L436.4 302.6 L437.0 302.9 L437.6 304.6 L438.2 301.6 L438.8 303.0 L439.4 301.2 L440.0 300.4 L440.6 301.3 L440.6 307.0 L440.0 309.0 L439.4 308.9 L438.8 309.9 L438.2 311.4 L437.6 311.5 L437.0 311.4 L436.4 311.2 L435.8 311.0 L435.2 307.8 L434.6 307.9 L434.0 306.0 L433.4 305.5 L432.8 307.2 L432.2 307.3 L431.6 308.7 L431.0 308.6 L430.4 311.1 L429.8 312.3 L429.2 311.7 L428.6 311.0 L428.0 311.0 L427.4 310.7 L426.8 308.0 L426.2 308.6 L425.6 306.1 L425.0 305.3 L424.4 308.3 L423.8 308.0 L423.2 308.5 L422.6 309.0 L422.0 310.1 L421.4 311.3 L420.8 312.4 L420.2 310.6 L419.6 310.3 L419.0 308.5 L418.4 309.2 L417.8 306.8 L417.2 306.8 L416.6 306.3 L416.0 307.3 L415.4 307.8Z" fill="#ff0000"/>
<path d="M449.0 299.4 L449.6 300.4 L450.2 299.2 L450.8 299.3 L451.4 299.8 L452.0 300.0 L452.6 300.9 L453.2 303.9 L453.8 304.3 L454.4 305.0 L455.0 302.9 L455.6 302.6 L456.2 300.4 L456.8 300.2 L457.4 298.6 L457.4 306.5 L456.8 309.0 L456.2 308.4 L455.6 309.4 L455.0 312.2 L454.4 310.6 L453.8 310.3 L453.2 311.3 L452.6 308.4 L452.0 309.6 L451.4 307.5 L450.8 306.3 L450.2 308.1 L449.6 307.9 L449.0 307.0Z" fill="#ff0000"/>
<path d="M474.2 299.7 L474.8 298.1 L475.4 298.1 L476.0 299.5 L476.6 301.0 L477.2 299.7 L477.8 303.0 L478.4 303.3 L479.0 302.2 L479.6 302.1 L480.2 302.4 L480.8 301.4 L481.4 302.7 L482.0 300.9 L482.6 301.2 L482.6 306.4 L482.0 308.7 L481.4 309.3 L480.8 310.1 L480.2 310.5 L479.6 312.1 L479.0 311.8 L478.4 309.8 L477.8 308.8 L477.2 309.5 L476.6 307.6 L476.0 308.9 L475.4 305.8 L474.8 306.4 L474.2 307.5Z" fill="#ff0000"/>
<path d="M491.0 298.4 L491.6 299.6 L492.2 298.5 L492.8 300.5 L493.4 300.2 L494.0 300.8 L494.6 302.7 L495.2 303.7 L495.8 304.6 L496.4 303.7 L497.0 302.5 L497.6 301.3 L498.2 302.7 L498.8 301.6 L499.4 301.2 L500.0 298.0 L500.6 300.0 L501.2 298.5 L501.8 299.0 L502.4 302.2 L503.0 302.7 L503.6 303.4 L504.2 304.2 L504.8 303.5 L505.4 303.9 L506.0 302.0 L506.6 301.4 L507.2 300.2 L507.8 300.3 L508.4 297.9 L509.0 299.1 L509.6 298.2 L510.2 300.6 L510.8 301.4 L511.4 300.5 L512.0 303.1 L512.6 302.5 L513.2 303.0 L513.8 303.8 L514.4 301.0 L515.0 302.5 L515.6 299.9 L516.2 300.3 L516.8 297.7 L517.4 298.5 L518.0 298.0 L518.6 299.8 L519.2 302.1 L519.8 301.5 L520.4 301.6 L521.0 302.8 L521.6 304.1 L522.2 303.7 L522.8 301.0 L523.4 302.0 L524.0 300.0 L524.6 298.8 L525.2 298.9 L525.8 300.3 L526.4 301.0 L527.0 300.9 L527.6 300.6 L528.2 301.1 L528.8 302.5 L529.4 302.2 L530.0 303.8 L530.6 303.1 L531.2 301.3 L531.8 300.8 L532.4 299.7 L533.0 300.7 L533.6 300.1 L534.2 299.0 L534.8 298.8 L535.4 299.7 L536.0 302.3 L536.6 303.1 L537.2 301.5 L537.8 303.1 L538.4 303.9 L539.0 302.4 L539.6 302.9 L540.2 302.3 L540.8 300.5 L541.4 299.5 L542.0 299.6 L542.6 298.3 L543.2 298.4 L543.8 300.0 L544.4 300.5 L545.0 302.4 L545.6 302.1 L546.2 304.7 L546.8 304.2 L547.4 302.8 L548.0 303.4 L548.6 301.0 L549.2 299.1 L549.8 300.5 L550.4 299.1 L551.0 299.1 L551.6 299.6 L552.2 300.3 L552.8 299.5 L553.4 302.1 L554.0 302.0 L554.6 304.3 L555.2 303.2 L555.8 303.0 L556.4 302.4 L557.0 302.2 L557.6 299.4 L558.2 300.9 L558.8 297.9 L559.4 300.1 L560.0 300.4 L560.6 300.0 L561.2 299.7 L561.8 302.8 L562.4 303.7 L563.0 302.8 L563.6 302.3 L564.2 303.7 L564.8 301.7 L565.4 301.9 L566.0 301.4 L566.6 301.1 L567.2 297.7 L567.8 299.3 L568.4 298.3 L569.0 301.7 L569.6 302.1 L570.2 300.4 L570.8 303.3 L571.4 303.8 L572.0 302.8 L572.6 303.3 L573.2 301.5 L573.8 301.4 L574.4 301.8 L575.0 298.8 L575.6 298.6 L576.2 299.2 L576.8 298.1 L577.4 301.4 L578.0 300.7 L578.6 301.0 L579.2 301.4 L579.8 303.5 L580.4 303.9 L581.0 303.2 L581.6 302.5 L582.2 300.3 L582.8 300.0 L583.4 300.2 L584.0 299.8 L584.6 300.0 L585.2 298.3 L585.8 300.6 L586.4 302.1 L587.0 300.6 L587.6 303.2 L588.2 304.1 L588.8 304.0 L589.4 303.7 L590.0 302.3 L590.6 300.6 L591.2 300.1 L591.8 300.3 L592.4 300.2 L593.0 297.9 L593.6 301.0 L594.2 300.0 L594.8 302.4 L595.4 302.2 L596.0 302.9 L596.6 302.2 L597.2 304.6 L597.8 304.0 L598.4 303.2 L599.0 301.6 L599.6 299.1 L600.2 298.6 L600.8 298.3 L601.4 298.9 L602.0 299.0 L602.6 300.2 L603.2 301.0 L603.8 301.2 L604.4 301.7 L605.0 304.5 L605.6 304.9 L606.2 301.4 L606.8 302.2 L607.4 301.1 L608.0 299.7 L608.6 298.8 L609.2 300.6 L609.8 300.0 L610.4 300.8 L611.0 299.5 L611.6 300.5 L612.2 301.7 L612.8 302.6 L613.4 302.7 L614.0 304.6 L614.6 302.7 L615.2 303.5 L615.8 300.3 L616.4 301.6 L617.0 298.4 L617.6 298.3 L618.2 297.5 L618.8 300.7 L619.4 301.1 L620.0 299.8 L620.6 302.9 L621.2 303.3 L621.8 302.6 L622.4 303.7 L623.0 302.9 L623.6 302.2 L624.2 300.6 L624.8 300.3 L625.4 301.2 L625.4 307.5 L624.8 307.5 L624.2 308.8 L623.6 310.6 L623.0 310.4 L622.4 311.4 L621.8 312.1 L621.2 311.0 L620.6 309.3 L620.0 309.0 L619.4 309.5 L618.8 306.5 L618.2 305.9 L617.6 308.0 L617.0 306.8 L616.4 309.5 L615.8 308.9 L615.2 311.5 L614.6 311.0 L614.0 310.6 L613.4 310.1 L612.8 309.8 L612.2 308.9 L611.6 308.8 L611.0 308.6 L610.4 306.9 L609.8 308.0 L609.2 307.2 L608.6 308.7 L608.0 308.0 L607.4 308.6 L606.8 309.9 L606.2 310.2 L605.6 310.5 L605.0 310.2 L604.4 311.5 L603.8 310.0 L603.2 309.7 L602.6 308.0 L602.0 306.5 L601.4 307.6 L600.8 307.5 L600.2 309.2 L599.6 308.8 L599.0 308.3 L598.4 308.8 L597.8 310.9 L597.2 312.4 L596.6 311.5 L596.0 311.8 L595.4 311.2 L594.8 308.8 L594.2 307.7 L593.6 307.4 L593.0 307.1 L592.4 305.8 L591.8 306.9 L591.2 309.5 L590.6 307.9 L590.0 309.4 L589.4 310.1 L588.8 311.4 L588.2 312.4 L587.6 311.3 L587.0 308.5 L586.4 309.4 L585.8 307.1 L585.2 306.9 L584.6 307.7 L584.0 306.5 L583.4 308.2 L582.8 309.6 L582.2 310.2 L581.6 309.6 L581.0 311.2 L580.4 311.3 L579.8 311.7 L579.2 311.9 L578.6 310.1 L578.0 309.4 L577.4 308.9 L576.8 307.9 L576.2 305.8 L575.6 306.7 L575.0 307.8 L574.4 307.6 L573.8 308.2 L573.2 310.7 L572.6 310.5 L572.0 312.3 L571.4 310.3 L570.8 310.7 L570.2 310.9 L569.6 309.2 L569.0 308.3 L568.4 308.4 L567.8 307.5 L567.2 307.4 L566.6 309.1 L566.0 309.0 L565.4 310.6 L564.8 310.0 L564.2 309.4 L563.6 312.4 L563.0 311.2 L562.4 309.1 L561.8 310.6 L561.2 308.5 L560.6 306.9 L560.0 307.4 L559.4 307.3 L558.8 307.8 L558.2 306.7 L557.6 308.5 L557.0 307.8 L556.4 311.2 L555.8 310.2 L555.2 312.3 L554.6 311.0 L554.0 309.5 L553.4 308.5 L552.8 307.7 L552.2 307.8 L551.6 307.2 L551.0 308.0 L550.4 308.0 L549.8 307.7 L549.2 309.4 L548.6 309.9 L548.0 308.9 L547.4 310.8 L546.8 311.8 L546.2 311.2 L545.6 310.4 L545.0 310.6 L544.4 310.4 L543.8 309.4 L543.2 307.7 L542.6 307.5 L542.0 305.9 L541.4 308.8 L540.8 307.5 L540.2 308.0 L539.6 308.6 L539.0 309.4 L538.4 310.4 L537.8 312.3 L537.2 311.0 L536.6 309.6 L536.0 307.8 L535.4 309.7 L534.8 307.7 L534.2 305.8 L533.6 305.7 L533.0 308.2 L532.4 310.0 L531.8 308.3 L531.2 309.9 L530.6 310.2 L530.0 311.0 L529.4 312.5 L528.8 311.2 L528.2 308.9 L527.6 307.7 L527.0 309.7 L526.4 307.0 L525.8 305.3 L525.2 306.6 L524.6 306.9 L524.0 307.6 L523.4 308.9 L522.8 311.5 L522.2 310.6 L521.6 311.9 L521.0 310.6 L520.4 309.2 L519.8 308.6 L519.2 308.7 L518.6 309.6 L518.0 308.5 L517.4 307.9 L516.8 308.3 L516.2 308.2 L515.6 309.7 L515.0 310.8 L514.4 310.9 L513.8 310.5 L513.2 312.8 L512.6 312.1 L512.0 309.9 L511.4 308.4 L510.8 309.6 L510.2 308.9 L509.6 306.4 L509.0 306.9 L508.4 307.4 L507.8 306.4 L507.2 307.7 L506.6 307.9 L506.0 309.7 L505.4 311.0 L504.8 311.2 L504.2 310.2 L503.6 310.9 L503.0 308.6 L502.4 308.4 L501.8 306.9 L501.2 307.8 L500.6 305.4 L500.0 306.7 L499.4 306.4 L498.8 307.6 L498.2 310.3 L497.6 310.7 L497.0 311.6 L496.4 312.6 L495.8 310.3 L495.2 311.6 L494.6 310.4 L494.0 308.2 L493.4 309.0 L492.8 307.5 L492.2 308.0 L491.6 306.1 L491.0 307.5Z" fill="#ff0000"/>
<path d="M113.0 274.7 L113.6 274.9 L114.2 271.2 L114.8 275.1 L115.4 274.7 L116.0 276.2 L116.6 274.6 L117.2 277.6 L117.8 278.9 L118.4 278.8 L119.0 276.2 L119.6 277.5 L120.2 274.7 L120.8 275.6 L121.4 274.7 L122.0 272.4 L122.6 271.7 L123.2 273.2 L123.8 272.8 L124.4 273.3 L125.0 274.7 L125.6 277.1 L126.2 276.1 L126.8 278.9 L127.4 275.9 L128.0 277.9 L128.6 276.4 L129.2 273.4 L129.8 273.1 L130.4 274.3 L131.0 273.3 L131.6 275.0 L132.2 274.5 L132.8 275.3 L133.4 276.4 L134.0 275.9 L134.6 277.2 L135.2 278.7 L135.8 277.8 L136.4 277.7 L137.0 275.7 L137.6 273.6 L138.2 274.4 L138.2 282.3 L137.6 282.4 L137.0 282.0 L136.4 282.8 L135.8 284.5 L135.2 284.4 L134.6 284.8 L134.0 283.9 L133.4 282.1 L132.8 283.2 L132.2 282.4 L131.6 280.0 L131.0 279.8 L130.4 282.2 L129.8 280.7 L129.2 283.2 L128.6 283.4 L128.0 283.7 L127.4 285.2 L126.8 287.2 L126.2 285.8 L125.6 284.3 L125.0 282.4 L124.4 282.0 L123.8 281.1 L123.2 283.1 L122.6 282.2 L122.0 280.6 L121.4 282.1 L120.8 282.8 L120.2 284.5 L119.6 283.8 L119.0 283.7 L118.4 286.6 L117.8 286.1 L117.2 283.1 L116.6 283.3 L116.0 283.3 L115.4 281.6 L114.8 280.9 L114.2 281.9 L113.6 281.2 L113.0 280.6Z" fill="#ff0000"/>
<path d="M146.6 275.8 L147.2 272.4 L147.8 272.8 L148.4 272.7 L149.0 273.3 L149.6 273.7 L150.2 275.1 L150.8 276.4 L151.4 277.1 L152.0 276.7 L152.6 276.3 L153.2 276.1 L153.8 277.2 L154.4 275.3 L155.0 275.3 L155.0 282.4 L154.4 284.4 L153.8 283.6 L153.2 285.8 L152.6 285.5 L152.0 284.4 L151.4 286.3 L150.8 284.7 L150.2 283.6 L149.6 283.8 L149.0 283.4 L148.4 281.5 L147.8 280.2 L147.2 281.6 L146.6 280.8Z" fill="#ff0000"/>
<path d="M180.2 275.4 L180.8 273.4 L181.4 273.4 L182.0 275.2 L182.6 273.5 L183.2 274.1 L183.8 277.2 L184.4 275.7 L185.0 275.8 L185.6 279.4 L186.2 277.7 L186.8 275.1 L187.4 276.9 L188.0 275.7 L188.6 275.5 L189.2 273.7 L189.8 273.0 L190.4 272.0 L191.0 272.9 L191.6 275.9 L192.2 275.9 L192.8 276.1 L193.4 275.6 L194.0 279.5 L194.6 278.1 L195.2 275.2 L195.8 276.5 L196.4 273.9 L197.0 274.9 L197.0 280.8 L196.4 284.2 L195.8 282.7 L195.2 282.8 L194.6 285.9 L194.0 284.5 L193.4 284.6 L192.8 284.0 L192.2 284.2 L191.6 282.1 L191.0 283.4 L190.4 283.0 L189.8 281.1 L189.2 281.3 L188.6 281.6 L188.0 283.5 L187.4 283.4 L186.8 285.9 L186.2 283.8 L185.6 285.8 L185.0 285.3 L184.4 283.0 L183.8 284.5 L183.2 282.2 L182.6 283.6 L182.0 280.6 L181.4 282.1 L180.8 282.2 L180.2 283.0Z" fill="#ff0000"/>
<path d="M213.8 272.5 L214.4 272.7 L215.0 272.0 L215.6 273.5 L216.2 274.2 L216.8 275.6 L217.4 277.0 L218.0 277.5 L218.6 275.7 L219.2 276.4 L219.8 275.9 L220.4 276.1 L221.0 274.8 L221.6 273.7 L222.2 275.6 L222.8 273.4 L223.4 271.1 L224.0 272.9 L224.6 273.6 L225.2 274.6 L225.8 274.4 L226.4 275.5 L227.0 278.3 L227.6 277.2 L228.2 278.4 L228.8 276.7 L229.4 276.5 L230.0 275.2 L230.6 272.7 L231.2 275.0 L231.8 272.4 L232.4 273.2 L233.0 274.8 L233.6 274.5 L234.2 275.2 L234.8 275.9 L235.4 276.2 L236.0 276.8 L236.6 277.2 L237.2 276.0 L237.8 274.4 L238.4 275.3 L239.0 273.0 L239.6 271.7 L240.2 271.6 L240.8 271.9 L241.4 272.9 L242.0 276.7 L242.6 276.3 L243.2 276.9 L243.8 276.6 L244.4 278.5 L245.0 278.4 L245.6 276.6 L246.2 276.1 L246.8 275.9 L247.4 275.0 L248.0 274.0 L248.6 273.5 L249.2 273.5 L249.8 274.2 L250.4 275.6 L251.0 274.7 L251.6 275.8 L252.2 276.0 L252.8 279.3 L253.4 276.2 L254.0 274.7 L254.6 276.8 L255.2 274.4 L255.8 275.4 L255.8 283.7 L255.2 283.2 L254.6 283.8 L254.0 285.3 L253.4 286.2 L252.8 284.6 L252.2 286.1 L251.6 284.8 L251.0 284.7 L250.4 282.3 L249.8 280.8 L249.2 280.8 L248.6 280.8 L248.0 282.7 L247.4 280.5 L246.8 283.0 L246.2 285.2 L245.6 285.4 L245.0 285.4 L244.4 285.5 L243.8 283.9 L243.2 283.8 L242.6 285.5 L242.0 282.4 L241.4 281.9 L240.8 281.4 L240.2 281.7 L239.6 281.7 L239.0 282.5 L238.4 281.2 L237.8 284.0 L237.2 284.8 L236.6 283.4 L236.0 287.5 L235.4 286.8 L234.8 284.9 L234.2 285.2 L233.6 281.5 L233.0 280.8 L232.4 281.0 L231.8 281.6 L231.2 282.6 L230.6 282.7 L230.0 283.5 L229.4 282.7 L228.8 283.5 L228.2 283.4 L227.6 286.0 L227.0 285.1 L226.4 284.4 L225.8 284.5 L225.2 281.6 L224.6 281.8 L224.0 282.1 L223.4 280.6 L222.8 282.7 L222.2 282.9 L221.6 281.3 L221.0 284.8 L220.4 282.9 L219.8 286.2 L219.2 287.0 L218.6 286.8 L218.0 283.6 L217.4 285.4 L216.8 283.5 L216.2 282.8 L215.6 280.8 L215.0 281.7 L214.4 281.3 L213.8 283.7Z" fill="#ff0000"/>
<path d="M264.2 274.1 L264.8 271.7 L265.4 274.3 L266.0 274.4 L266.6 275.0 L267.2 275.7 L267.8 274.4 L268.4 275.2 L269.0 278.1 L269.6 279.2 L270.2 278.5 L270.8 274.8 L271.4 274.9 L272.0 276.5 L272.6 275.6 L272.6 283.4 L272.0 283.8 L271.4 283.7 L270.8 283.1 L270.2 283.7 L269.6 286.1 L269.0 286.4 L268.4 286.0 L267.8 285.5 L267.2 283.6 L266.6 282.7 L266.0 280.6 L265.4 281.4 L264.8 281.0 L264.2 281.3Z" fill="#ff0000"/>
<path d="M289.4 273.0 L290.0 273.5 L290.6 272.1 L291.2 273.5 L291.8 273.7 L292.4 274.3 L293.0 276.4 L293.6 276.3 L294.2 277.2 L294.8 278.5 L295.4 277.6 L296.0 276.8 L296.6 277.3 L297.2 274.0 L297.8 273.8 L297.8 280.6 L297.2 284.5 L296.6 285.2 L296.0 283.3 L295.4 286.0 L294.8 287.1 L294.2 284.5 L293.6 284.2 L293.0 284.7 L292.4 283.7 L291.8 281.0 L291.2 283.0 L290.6 279.3 L290.0 279.8 L289.4 282.1Z" fill="#ff0000"/>
<path d="M306.2 275.2 L306.8 273.0 L307.4 271.3 L308.0 274.5 L308.6 275.5 L309.2 275.1 L309.8 276.3 L310.4 277.2 L311.0 277.2 L311.6 279.4 L312.2 275.8 L312.8 275.6 L313.4 274.9 L314.0 274.1 L314.6 275.3 L314.6 283.7 L314.0 282.0 L313.4 284.7 L312.8 283.4 L312.2 283.5 L311.6 286.2 L311.0 283.9 L310.4 285.7 L309.8 285.3 L309.2 282.8 L308.6 280.7 L308.0 280.6 L307.4 280.1 L306.8 281.8 L306.2 280.6Z" fill="#ff0000"/>
<path d="M323.0 272.7 L323.6 273.2 L324.2 273.3 L324.8 275.1 L325.4 275.9 L326.0 275.6 L326.6 276.3 L327.2 276.8 L327.8 276.8 L328.4 277.7 L329.0 277.3 L329.6 277.1 L330.2 276.4 L330.8 273.8 L331.4 273.9 L331.4 282.2 L330.8 281.1 L330.2 283.2 L329.6 285.4 L329.0 286.1 L328.4 284.3 L327.8 283.9 L327.2 285.0 L326.6 282.8 L326.0 281.7 L325.4 283.6 L324.8 280.9 L324.2 282.2 L323.6 279.8 L323.0 283.5Z" fill="#ff0000"/>
<path d="M339.8 273.3 L340.4 272.7 L341.0 273.9 L341.6 274.3 L342.2 275.7 L342.8 275.4 L343.4 277.1 L344.0 275.4 L344.6 277.7 L345.2 278.9 L345.8 275.5 L346.4 278.0 L347.0 277.0 L347.6 274.5 L348.2 275.4 L348.2 282.6 L347.6 282.7 L347.0 284.6 L346.4 283.0 L345.8 284.1 L345.2 286.6 L344.6 287.0 L344.0 285.9 L343.4 285.3 L342.8 281.5 L342.2 283.0 L341.6 281.8 L341.0 280.8 L340.4 280.4 L339.8 283.6Z" fill="#ff0000"/>
<path d="M373.4 275.3 L374.0 273.0 L374.6 271.8 L375.2 274.8 L375.8 275.6 L376.4 276.7 L377.0 275.2 L377.6 276.6 L378.2 276.2 L378.8 276.7 L379.4 277.6 L380.0 275.4 L380.6 273.9 L381.2 275.0 L381.8 272.5 L382.4 272.0 L383.0 273.6 L383.6 275.1 L384.2 272.8 L384.8 276.3 L385.4 277.3 L386.0 278.0 L386.6 276.2 L387.2 276.6 L387.8 277.2 L388.4 275.3 L389.0 275.9 L389.6 274.9 L390.2 275.3 L390.2 280.6 L389.6 281.3 L389.0 282.3 L388.4 284.5 L387.8 283.5 L387.2 285.6 L386.6 286.1 L386.0 284.3 L385.4 283.7 L384.8 283.3 L384.2 282.4 L383.6 282.2 L383.0 281.3 L382.4 282.8 L381.8 282.9 L381.2 284.0 L380.6 282.8 L380.0 284.2 L379.4 283.5 L378.8 284.8 L378.2 286.4 L377.6 286.0 L377.0 284.9 L376.4 284.3 L375.8 282.3 L375.2 280.9 L374.6 282.0 L374.0 281.8 L373.4 280.8Z" fill="#ff0000"/>
<path d="M407.0 274.3 L407.6 272.2 L408.2 271.6 L408.8 274.8 L409.4 273.2 L410.0 274.6 L410.6 277.4 L411.2 276.8 L411.8 275.8 L412.4 278.6 L413.0 276.8 L413.6 274.8 L414.2 276.5 L414.8 276.4 L415.4 272.8 L415.4 280.9 L414.8 283.8 L414.2 281.9 L413.6 283.3 L413.0 284.7 L412.4 284.2 L411.8 285.6 L411.2 285.8 L410.6 282.8 L410.0 283.6 L409.4 282.7 L408.8 280.9 L408.2 281.1 L407.6 281.7 L407.0 280.8Z" fill="#ff0000"/>
<path d="M440.6 275.7 L441.2 274.2 L441.8 271.5 L442.4 274.4 L443.0 275.1 L443.6 275.9 L444.2 275.3 L444.8 277.1 L445.4 277.1 L446.0 277.2 L446.6 278.3 L447.2 275.9 L447.8 276.9 L448.4 276.0 L449.0 274.8 L449.0 281.6 L448.4 283.6 L447.8 284.5 L447.2 283.4 L446.6 283.4 L446.0 285.1 L445.4 284.5 L444.8 286.2 L444.2 285.2 L443.6 284.4 L443.0 283.3 L442.4 282.0 L441.8 281.7 L441.2 281.7 L440.6 282.3Z" fill="#ff0000"/>
<path d="M457.4 272.6 L458.0 272.1 L458.6 272.5 L459.2 273.2 L459.8 275.0 L460.4 274.9 L461.0 275.4 L461.6 275.9 L462.2 279.0 L462.8 278.0 L463.4 276.8 L464.0 275.9 L464.6 274.9 L465.2 274.6 L465.8 275.3 L466.4 272.0 L467.0 273.6 L467.6 273.6 L468.2 275.5 L468.8 276.5 L469.4 276.6 L470.0 277.7 L470.6 277.3 L471.2 277.2 L471.8 276.6 L472.4 275.9 L473.0 275.6 L473.6 275.7 L474.2 273.7 L474.2 283.6 L473.6 283.6 L473.0 284.1 L472.4 283.6 L471.8 284.9 L471.2 286.1 L470.6 284.2 L470.0 283.2 L469.4 282.9 L468.8 282.2 L468.2 283.4 L467.6 281.5 L467.0 281.2 L466.4 282.8 L465.8 281.8 L465.2 281.9 L464.6 283.7 L464.0 284.4 L463.4 285.1 L462.8 286.9 L462.2 284.9 L461.6 283.7 L461.0 285.1 L460.4 282.3 L459.8 282.0 L459.2 281.9 L458.6 282.4 L458.0 282.9 L457.4 283.1Z" fill="#ff0000"/>
<path d="M482.6 273.6 L483.2 272.4 L483.8 273.3 L484.4 272.9 L485.0 275.5 L485.6 273.5 L486.2 274.2 L486.8 277.0 L487.4 279.0 L488.0 277.0 L488.6 276.0 L489.2 275.4 L489.8 275.0 L490.4 274.2 L491.0 275.4 L491.0 282.6 L490.4 283.0 L489.8 283.7 L489.2 284.6 L488.6 284.8 L488.0 286.1 L487.4 285.7 L486.8 283.2 L486.2 284.3 L485.6 283.1 L485.0 283.9 L484.4 282.4 L483.8 280.7 L483.2 280.6 L482.6 282.2Z" fill="#ff0000"/>
<path d="M113.0 305.2V279.3 M138.2 279.3V305.2" stroke="#ff0000" stroke-width="1"/>
<path d="M146.6 305.2V279.3 M155.0 279.3V305.2" stroke="#ff0000" stroke-width="1"/>
<path d="M180.2 305.2V279.3 M197.0 279.3V305.2" stroke="#ff0000" stroke-width="1"/>
<path d="M213.8 305.2V279.3 M255.8 279.3V305.2" stroke="#ff0000" stroke-width="1"/>
<path d="M264.2 305.2V279.3 M272.6 279.3V305.2" stroke="#ff0000" stroke-width="1"/>
<path d="M289.4 305.2V279.3 M297.8 279.3V305.2" stroke="#ff0000" stroke-width="1"/>
<path d="M306.2 305.2V279.3 M314.6 279.3V305.2" stroke="#ff0000" stroke-width="1"/>
<path d="M323.0 305.2V279.3 M331.4 279.3V305.2" stroke="#ff0000" stroke-width="1"/>
<path d="M339.8 305.2V279.3 M348.2 279.3V305.2" stroke="#ff0000" stroke-width="1"/>
<path d="M373.4 305.2V279.3 M390.2 279.3V305.2" stroke="#ff0000" stroke-width="1"/>
<path d="M407.0 305.2V279.3 M415.4 279.3V305.2" stroke="#ff0000" stroke-width="1"/>
<path d="M440.6 305.2V279.3 M449.0 279.3V305.2" stroke="#ff0000" stroke-width="1"/>
<path d="M457.4 305.2V279.3 M474.2 279.3V305.2" stroke="#ff0000" stroke-width="1"/>
<path d="M482.6 305.2V279.3 M491.0 279.3V305.2" stroke="#ff0000" stroke-width="1"/>
<path d="M45.3 300.2 L45.9 298.6 L46.5 300.4 L47.1 299.3 L47.7 298.4 L48.3 299.7 L48.9 301.1 L49.5 303.2 L50.1 304.2 L50.7 302.0 L51.3 303.4 L51.9 304.2 L52.5 302.5 L53.1 302.8 L53.7 301.0 L54.3 299.2 L54.9 299.9 L55.5 298.6 L56.1 299.5 L56.7 301.8 L57.3 301.2 L57.9 302.9 L58.5 302.8 L59.1 303.0 L59.7 303.4 L60.3 302.1 L60.9 303.2 L61.5 301.5 L62.1 301.6 L62.7 300.3 L63.3 300.2 L63.9 299.6 L64.5 299.8 L65.1 300.1 L65.7 301.0 L66.3 300.4 L66.9 303.9 L67.5 304.9 L68.1 302.8 L68.7 304.6 L69.3 302.4 L69.9 303.1 L70.5 302.4 L71.1 300.7 L71.7 297.9 L72.3 297.8 L72.9 298.3 L73.5 301.2 L74.1 301.2 L74.7 300.5 L75.3 303.6 L75.9 302.4 L76.5 303.5 L77.1 303.9 L77.7 302.3 L78.3 302.5 L78.9 300.6 L79.5 298.5 L80.1 297.8 L80.7 298.9 L81.3 301.0 L81.9 301.7 L82.5 302.5 L83.1 302.8 L83.7 301.8 L84.3 304.5 L84.9 302.2 L85.5 303.3 L86.1 301.7 L86.7 300.7 L87.3 300.0 L87.9 301.3 L88.5 300.4 L89.1 299.6 L89.7 299.9 L90.3 299.0 L90.9 300.3 L91.5 302.2 L92.1 302.1 L92.7 302.8 L93.3 303.7 L93.9 303.4 L94.5 303.9 L95.1 301.5 L95.7 300.1 L96.3 300.4 L96.9 299.0 L97.5 298.3 L98.1 298.7 L98.7 301.7 L99.3 301.9 L99.9 300.4 L100.5 301.9 L101.1 303.0 L101.7 304.7 L102.3 304.6 L102.9 300.8 L103.5 303.1 L104.1 300.3 L104.7 299.2 L105.3 300.2 L105.9 298.1 L106.5 299.6 L107.1 300.1 L107.7 302.1 L108.3 302.9 L108.9 302.3 L109.5 302.9 L110.1 303.3 L110.7 302.0 L111.3 301.1 L111.9 300.5 L112.5 300.2 L112.5 308.6 L111.9 310.0 L111.3 311.5 L110.7 310.8 L110.1 311.1 L109.5 311.2 L108.9 310.1 L108.3 309.6 L107.7 307.4 L107.1 308.1 L106.5 308.2 L105.9 305.7 L105.3 307.8 L104.7 306.3 L104.1 307.0 L103.5 309.9 L102.9 309.5 L102.3 312.0 L101.7 310.2 L101.1 309.7 L100.5 309.1 L99.9 309.4 L99.3 308.1 L98.7 308.0 L98.1 307.4 L97.5 306.3 L96.9 306.7 L96.3 306.9 L95.7 307.7 L95.1 308.1 L94.5 309.9 L93.9 311.5 L93.3 311.0 L92.7 310.4 L92.1 311.6 L91.5 308.3 L90.9 308.7 L90.3 307.8 L89.7 308.3 L89.1 307.9 L88.5 307.2 L87.9 307.7 L87.3 307.2 L86.7 308.4 L86.1 311.0 L85.5 310.8 L84.9 311.8 L84.3 311.5 L83.7 310.0 L83.1 308.7 L82.5 308.9 L81.9 306.5 L81.3 307.7 L80.7 305.5 L80.1 306.8 L79.5 307.2 L78.9 309.3 L78.3 309.8 L77.7 310.5 L77.1 309.7 L76.5 310.1 L75.9 310.2 L75.3 310.2 L74.7 309.4 L74.1 307.5 L73.5 307.6 L72.9 307.8 L72.3 306.8 L71.7 307.4 L71.1 307.7 L70.5 307.0 L69.9 308.1 L69.3 311.0 L68.7 309.6 L68.1 310.7 L67.5 309.5 L66.9 311.8 L66.3 310.2 L65.7 308.9 L65.1 308.1 L64.5 306.9 L63.9 307.7 L63.3 308.1 L62.7 308.3 L62.1 309.1 L61.5 308.7 L60.9 311.5 L60.3 311.7 L59.7 311.3 L59.1 310.2 L58.5 310.0 L57.9 308.6 L57.3 308.0 L56.7 308.4 L56.1 308.4 L55.5 305.8 L54.9 308.4 L54.3 308.0 L53.7 308.6 L53.1 309.3 L52.5 311.1 L51.9 310.2 L51.3 311.3 L50.7 310.8 L50.1 311.7 L49.5 310.6 L48.9 310.3 L48.3 306.9 L47.7 306.2 L47.1 305.4 L46.5 307.0 L45.9 307.7 L45.3 308.2Z" fill="#00ff00"/>
<path d="M138.2 301.0 L138.8 298.9 L139.4 298.4 L140.0 299.2 L140.6 301.1 L141.2 300.4 L141.8 302.4 L142.4 302.7 L143.0 302.8 L143.6 303.1 L144.2 302.5 L144.8 302.6 L145.4 301.2 L146.0 299.9 L146.6 300.0 L146.6 307.9 L146.0 308.3 L145.4 308.7 L144.8 309.9 L144.2 312.3 L143.6 312.5 L143.0 311.7 L142.4 309.9 L141.8 308.8 L141.2 309.9 L140.6 307.3 L140.0 306.9 L139.4 306.6 L138.8 306.3 L138.2 306.5Z" fill="#00ff00"/>
<path d="M155.0 300.6 L155.6 300.2 L156.2 297.4 L156.8 298.3 L157.4 299.4 L158.0 302.6 L158.6 303.2 L159.2 301.1 L159.8 302.2 L160.4 304.9 L161.0 304.5 L161.6 302.4 L162.2 302.4 L162.8 302.1 L163.4 301.6 L164.0 299.2 L164.6 299.1 L165.2 298.8 L165.8 299.1 L166.4 301.7 L167.0 301.5 L167.6 302.0 L168.2 301.8 L168.8 304.8 L169.4 302.8 L170.0 302.3 L170.6 301.8 L171.2 301.4 L171.8 301.3 L172.4 300.7 L173.0 298.7 L173.6 299.9 L174.2 300.0 L174.8 301.7 L175.4 302.3 L176.0 303.4 L176.6 302.7 L177.2 303.2 L177.8 303.5 L178.4 302.9 L179.0 302.8 L179.6 302.2 L180.2 300.7 L180.2 308.5 L179.6 309.5 L179.0 309.0 L178.4 309.6 L177.8 310.4 L177.2 310.4 L176.6 309.8 L176.0 311.6 L175.4 310.5 L174.8 309.9 L174.2 308.4 L173.6 308.4 L173.0 307.2 L172.4 305.5 L171.8 307.0 L171.2 308.8 L170.6 309.2 L170.0 309.2 L169.4 311.9 L168.8 312.3 L168.2 310.8 L167.6 308.7 L167.0 310.8 L166.4 308.8 L165.8 306.9 L165.2 307.4 L164.6 307.8 L164.0 307.7 L163.4 308.1 L162.8 307.8 L162.2 309.8 L161.6 311.0 L161.0 310.4 L160.4 311.5 L159.8 311.9 L159.2 310.7 L158.6 308.7 L158.0 309.9 L157.4 307.2 L156.8 308.7 L156.2 305.2 L155.6 307.0 L155.0 306.2Z" fill="#00ff00"/>
<path d="M197.0 300.4 L197.6 298.2 L198.2 297.7 L198.8 298.2 L199.4 300.0 L200.0 301.5 L200.6 301.4 L201.2 301.7 L201.8 303.5 L202.4 302.8 L203.0 304.3 L203.6 303.3 L204.2 301.9 L204.8 301.1 L205.4 300.8 L206.0 299.9 L206.6 298.7 L207.2 298.2 L207.8 300.9 L208.4 301.1 L209.0 301.2 L209.6 304.0 L210.2 303.9 L210.8 304.6 L211.4 304.7 L212.0 301.6 L212.6 303.0 L213.2 302.3 L213.8 300.2 L213.8 307.1 L213.2 307.4 L212.6 310.0 L212.0 308.9 L211.4 310.8 L210.8 310.3 L210.2 309.9 L209.6 309.1 L209.0 308.1 L208.4 309.3 L207.8 308.6 L207.2 305.8 L206.6 307.0 L206.0 306.2 L205.4 309.2 L204.8 307.8 L204.2 310.7 L203.6 310.4 L203.0 311.3 L202.4 311.9 L201.8 310.8 L201.2 308.8 L200.6 307.8 L200.0 308.1 L199.4 306.5 L198.8 306.9 L198.2 307.8 L197.6 307.7 L197.0 309.3Z" fill="#00ff00"/>
<path d="M255.8 299.2 L256.4 299.3 L257.0 300.4 L257.6 299.9 L258.2 301.6 L258.8 301.0 L259.4 303.2 L260.0 301.2 L260.6 303.2 L261.2 303.5 L261.8 304.2 L262.4 302.6 L263.0 303.1 L263.6 302.1 L264.2 300.2 L264.2 307.1 L263.6 309.3 L263.0 308.6 L262.4 310.6 L261.8 311.2 L261.2 311.4 L260.6 311.7 L260.0 311.8 L259.4 310.8 L258.8 307.6 L258.2 307.7 L257.6 308.2 L257.0 307.5 L256.4 306.6 L255.8 307.8Z" fill="#00ff00"/>
<path d="M272.6 299.2 L273.2 300.1 L273.8 300.5 L274.4 301.1 L275.0 299.1 L275.6 299.7 L276.2 301.3 L276.8 302.8 L277.4 303.6 L278.0 304.4 L278.6 304.0 L279.2 302.6 L279.8 303.1 L280.4 300.2 L281.0 300.2 L281.6 299.0 L282.2 298.0 L282.8 300.0 L283.4 299.5 L284.0 301.2 L284.6 301.7 L285.2 301.4 L285.8 302.7 L286.4 303.3 L287.0 302.7 L287.6 302.3 L288.2 302.7 L288.8 299.9 L289.4 301.6 L289.4 308.1 L288.8 308.5 L288.2 308.3 L287.6 309.7 L287.0 310.7 L286.4 312.8 L285.8 309.6 L285.2 310.2 L284.6 310.2 L284.0 308.0 L283.4 306.4 L282.8 306.9 L282.2 308.0 L281.6 307.7 L281.0 309.3 L280.4 307.4 L279.8 308.4 L279.2 310.1 L278.6 310.7 L278.0 312.0 L277.4 311.4 L276.8 310.5 L276.2 308.2 L275.6 308.8 L275.0 308.1 L274.4 308.7 L273.8 305.1 L273.2 306.7 L272.6 307.8Z" fill="#00ff00"/>
<path d="M297.8 299.1 L298.4 300.4 L299.0 299.9 L299.6 299.7 L300.2 301.1 L300.8 302.2 L301.4 301.4 L302.0 303.4 L302.6 303.6 L303.2 302.5 L303.8 303.2 L304.4 301.6 L305.0 303.0 L305.6 300.1 L306.2 301.4 L306.2 308.5 L305.6 308.8 L305.0 310.0 L304.4 309.3 L303.8 311.5 L303.2 311.9 L302.6 310.8 L302.0 311.6 L301.4 310.0 L300.8 307.2 L300.2 307.0 L299.6 306.1 L299.0 306.5 L298.4 308.4 L297.8 308.2Z" fill="#00ff00"/>
<path d="M314.6 301.2 L315.2 299.0 L315.8 300.2 L316.4 298.9 L317.0 301.8 L317.6 300.0 L318.2 302.7 L318.8 301.5 L319.4 302.7 L320.0 303.0 L320.6 304.1 L321.2 300.9 L321.8 302.7 L322.4 300.0 L323.0 301.5 L323.0 308.9 L322.4 307.7 L321.8 310.0 L321.2 308.5 L320.6 310.1 L320.0 309.9 L319.4 310.0 L318.8 311.3 L318.2 308.1 L317.6 309.1 L317.0 307.7 L316.4 306.0 L315.8 306.0 L315.2 307.4 L314.6 308.7Z" fill="#00ff00"/>
<path d="M331.4 298.6 L332.0 299.2 L332.6 298.1 L333.2 298.6 L333.8 300.4 L334.4 301.2 L335.0 301.4 L335.6 302.3 L336.2 304.1 L336.8 302.6 L337.4 304.6 L338.0 302.0 L338.6 301.4 L339.2 300.0 L339.8 299.6 L339.8 307.5 L339.2 307.4 L338.6 309.9 L338.0 311.4 L337.4 311.0 L336.8 310.9 L336.2 312.2 L335.6 311.6 L335.0 310.4 L334.4 308.5 L333.8 309.5 L333.2 308.1 L332.6 307.0 L332.0 305.6 L331.4 309.0Z" fill="#00ff00"/>
<path d="M348.2 301.0 L348.8 299.8 L349.4 298.7 L350.0 301.1 L350.6 299.6 L351.2 300.2 L351.8 302.6 L352.4 303.3 L353.0 304.3 L353.6 304.0 L354.2 304.6 L354.8 302.0 L355.4 303.0 L356.0 300.8 L356.6 301.0 L357.2 299.4 L357.8 298.6 L358.4 300.4 L359.0 301.2 L359.6 302.1 L360.2 301.1 L360.8 302.5 L361.4 301.8 L362.0 304.3 L362.6 302.7 L363.2 303.4 L363.8 301.1 L364.4 299.5 L365.0 300.0 L365.6 299.9 L366.2 300.1 L366.8 300.3 L367.4 298.9 L368.0 300.3 L368.6 300.4 L369.2 302.7 L369.8 304.9 L370.4 304.3 L371.0 304.4 L371.6 303.7 L372.2 300.2 L372.8 300.7 L373.4 299.2 L373.4 307.7 L372.8 307.1 L372.2 310.5 L371.6 310.9 L371.0 309.3 L370.4 312.0 L369.8 312.3 L369.2 310.7 L368.6 308.1 L368.0 308.6 L367.4 307.6 L366.8 305.7 L366.2 307.7 L365.6 305.5 L365.0 307.2 L364.4 309.4 L363.8 308.8 L363.2 308.6 L362.6 309.5 L362.0 310.7 L361.4 311.9 L360.8 311.5 L360.2 310.4 L359.6 309.0 L359.0 308.8 L358.4 307.6 L357.8 307.1 L357.2 306.5 L356.6 306.6 L356.0 307.8 L355.4 309.4 L354.8 310.1 L354.2 311.0 L353.6 310.0 L353.0 309.4 L352.4 311.2 L351.8 309.3 L351.2 307.3 L350.6 309.1 L350.0 308.2 L349.4 305.9 L348.8 307.7 L348.2 307.0Z" fill="#00ff00"/>
<path d="M390.2 299.2 L390.8 299.1 L391.4 300.1 L392.0 299.9 L392.6 298.9 L393.2 300.3 L393.8 303.2 L394.4 303.5 L395.0 303.1 L395.6 304.3 L396.2 302.4 L396.8 302.0 L397.4 302.9 L398.0 301.3 L398.6 299.7 L399.2 299.5 L399.8 298.9 L400.4 300.8 L401.0 300.3 L401.6 300.9 L402.2 301.2 L402.8 301.5 L403.4 304.4 L404.0 303.4 L404.6 301.7 L405.2 302.6 L405.8 301.7 L406.4 301.8 L407.0 299.9 L407.0 308.1 L406.4 307.4 L405.8 310.6 L405.2 308.5 L404.6 309.8 L404.0 310.1 L403.4 310.3 L402.8 310.1 L402.2 308.1 L401.6 308.1 L401.0 307.1 L400.4 307.3 L399.8 305.1 L399.2 305.4 L398.6 306.7 L398.0 309.8 L397.4 308.9 L396.8 310.9 L396.2 310.3 L395.6 310.3 L395.0 310.6 L394.4 310.5 L393.8 310.8 L393.2 307.5 L392.6 306.6 L392.0 306.6 L391.4 305.2 L390.8 305.9 L390.2 308.1Z" fill="#00ff00"/>
<path d="M415.4 301.2 L416.0 299.0 L416.6 300.4 L417.2 298.5 L417.8 299.3 L418.4 301.8 L419.0 301.5 L419.6 302.5 L420.2 304.2 L420.8 305.2 L421.4 304.4 L422.0 300.8 L422.6 300.1 L423.2 302.4 L423.8 300.5 L424.4 300.7 L425.0 300.5 L425.6 299.7 L426.2 299.1 L426.8 301.2 L427.4 302.4 L428.0 301.8 L428.6 302.6 L429.2 304.8 L429.8 304.3 L430.4 303.1 L431.0 300.6 L431.6 299.5 L432.2 299.5 L432.8 298.7 L433.4 298.6 L434.0 299.5 L434.6 299.0 L435.2 302.2 L435.8 302.5 L436.4 302.2 L437.0 304.3 L437.6 304.1 L438.2 303.1 L438.8 301.7 L439.4 302.9 L440.0 300.5 L440.6 300.1 L440.6 307.7 L440.0 308.8 L439.4 309.5 L438.8 311.4 L438.2 309.4 L437.6 312.0 L437.0 311.4 L436.4 308.7 L435.8 310.2 L435.2 308.8 L434.6 307.4 L434.0 307.4 L433.4 307.0 L432.8 308.3 L432.2 308.4 L431.6 309.1 L431.0 309.5 L430.4 309.9 L429.8 311.3 L429.2 311.1 L428.6 310.5 L428.0 309.8 L427.4 310.3 L426.8 309.7 L426.2 309.2 L425.6 306.4 L425.0 306.4 L424.4 306.1 L423.8 307.1 L423.2 308.0 L422.6 309.6 L422.0 308.8 L421.4 311.9 L420.8 311.7 L420.2 309.7 L419.6 309.4 L419.0 309.9 L418.4 309.1 L417.8 307.1 L417.2 308.2 L416.6 307.1 L416.0 306.1 L415.4 306.8Z" fill="#00ff00"/>
<path d="M449.0 298.5 L449.6 299.5 L450.2 298.4 L450.8 298.1 L451.4 301.3 L452.0 300.1 L452.6 302.8 L453.2 301.4 L453.8 303.1 L454.4 302.4 L455.0 301.5 L455.6 301.9 L456.2 302.2 L456.8 299.5 L457.4 298.5 L457.4 306.4 L456.8 309.3 L456.2 308.5 L455.6 310.7 L455.0 310.0 L454.4 310.1 L453.8 312.3 L453.2 311.0 L452.6 309.5 L452.0 310.1 L451.4 307.2 L450.8 305.9 L450.2 307.5 L449.6 307.9 L449.0 308.9Z" fill="#00ff00"/>
<path d="M474.2 299.7 L474.8 297.9 L475.4 299.7 L476.0 300.7 L476.6 300.2 L477.2 302.3 L477.8 301.3 L478.4 303.9 L479.0 301.9 L479.6 303.7 L480.2 304.5 L480.8 301.4 L481.4 302.0 L482.0 299.4 L482.6 301.4 L482.6 308.1 L482.0 307.0 L481.4 309.1 L480.8 310.6 L480.2 311.8 L479.6 312.4 L479.0 310.6 L478.4 310.3 L477.8 310.5 L477.2 307.5 L476.6 307.5 L476.0 306.5 L475.4 305.3 L474.8 307.6 L474.2 308.4Z" fill="#00ff00"/>
<path d="M491.0 298.6 L491.6 300.3 L492.2 298.0 L492.8 299.2 L493.4 301.4 L494.0 300.5 L494.6 303.2 L495.2 302.9 L495.8 304.5 L496.4 303.3 L497.0 302.6 L497.6 303.5 L498.2 302.0 L498.8 300.5 L499.4 298.7 L500.0 300.5 L500.6 300.3 L501.2 300.6 L501.8 300.9 L502.4 299.9 L503.0 302.7 L503.6 304.1 L504.2 302.7 L504.8 303.4 L505.4 302.9 L506.0 303.0 L506.6 301.4 L507.2 299.4 L507.8 300.5 L508.4 298.5 L509.0 299.9 L509.6 300.0 L510.2 300.6 L510.8 301.3 L511.4 302.7 L512.0 302.0 L512.6 303.6 L513.2 304.4 L513.8 304.0 L514.4 303.7 L515.0 302.3 L515.6 299.7 L516.2 298.8 L516.8 300.3 L517.4 298.9 L518.0 298.6 L518.6 302.0 L519.2 301.7 L519.8 303.5 L520.4 303.9 L521.0 304.4 L521.6 304.8 L522.2 304.2 L522.8 303.2 L523.4 299.9 L524.0 300.0 L524.6 298.5 L525.2 298.9 L525.8 300.4 L526.4 299.8 L527.0 298.9 L527.6 302.0 L528.2 301.6 L528.8 303.6 L529.4 302.5 L530.0 303.2 L530.6 301.6 L531.2 301.4 L531.8 301.6 L532.4 299.4 L533.0 300.4 L533.6 300.3 L534.2 299.5 L534.8 300.0 L535.4 299.0 L536.0 301.3 L536.6 302.7 L537.2 303.4 L537.8 303.7 L538.4 304.9 L539.0 302.8 L539.6 302.6 L540.2 302.3 L540.8 302.1 L541.4 299.9 L542.0 298.3 L542.6 300.2 L543.2 298.3 L543.8 299.5 L544.4 301.0 L545.0 302.6 L545.6 301.8 L546.2 304.8 L546.8 303.1 L547.4 304.5 L548.0 301.4 L548.6 302.0 L549.2 299.8 L549.8 299.3 L550.4 299.4 L551.0 298.6 L551.6 300.7 L552.2 301.1 L552.8 300.4 L553.4 300.6 L554.0 301.2 L554.6 302.7 L555.2 304.0 L555.8 304.3 L556.4 302.7 L557.0 302.8 L557.6 301.3 L558.2 299.6 L558.8 300.4 L559.4 298.4 L560.0 299.7 L560.6 300.8 L561.2 302.6 L561.8 301.0 L562.4 303.2 L563.0 304.1 L563.6 305.0 L564.2 302.3 L564.8 301.5 L565.4 301.1 L566.0 301.3 L566.6 299.7 L567.2 300.8 L567.8 297.8 L568.4 300.7 L569.0 301.3 L569.6 302.6 L570.2 300.7 L570.8 302.4 L571.4 302.3 L572.0 304.1 L572.6 301.6 L573.2 301.8 L573.8 302.8 L574.4 301.6 L575.0 299.5 L575.6 298.0 L576.2 299.9 L576.8 300.2 L577.4 300.6 L578.0 302.2 L578.6 301.0 L579.2 302.0 L579.8 303.0 L580.4 304.2 L581.0 303.4 L581.6 300.6 L582.2 300.9 L582.8 300.4 L583.4 300.7 L584.0 300.1 L584.6 300.3 L585.2 299.7 L585.8 299.6 L586.4 300.5 L587.0 301.9 L587.6 302.6 L588.2 304.7 L588.8 304.2 L589.4 303.9 L590.0 303.4 L590.6 299.9 L591.2 301.9 L591.8 298.8 L592.4 300.4 L593.0 297.5 L593.6 298.6 L594.2 299.7 L594.8 300.0 L595.4 301.1 L596.0 302.1 L596.6 303.2 L597.2 303.5 L597.8 303.1 L598.4 301.6 L599.0 300.1 L599.6 301.6 L600.2 298.8 L600.8 297.9 L601.4 297.9 L602.0 300.3 L602.6 301.4 L603.2 300.3 L603.8 300.7 L604.4 303.4 L605.0 302.5 L605.6 302.1 L606.2 302.9 L606.8 301.2 L607.4 300.9 L608.0 299.7 L608.6 301.5 L609.2 298.2 L609.8 297.9 L610.4 300.8 L611.0 300.0 L611.6 302.3 L612.2 302.9 L612.8 301.3 L613.4 302.8 L614.0 302.4 L614.6 303.2 L615.2 301.1 L615.8 300.2 L616.4 299.5 L617.0 299.3 L617.6 299.8 L618.2 299.3 L618.8 298.7 L619.4 299.5 L620.0 302.3 L620.6 301.0 L621.2 304.3 L621.8 303.8 L622.4 302.6 L623.0 302.2 L623.6 301.4 L624.2 302.9 L624.8 301.0 L625.4 299.8 L625.4 308.2 L624.8 308.2 L624.2 309.0 L623.6 310.3 L623.0 310.1 L622.4 310.5 L621.8 312.2 L621.2 309.9 L620.6 308.1 L620.0 308.0 L619.4 306.6 L618.8 307.3 L618.2 305.2 L617.6 307.1 L617.0 309.0 L616.4 306.8 L615.8 307.6 L615.2 309.2 L614.6 309.7 L614.0 311.1 L613.4 311.2 L612.8 309.1 L612.2 310.6 L611.6 310.1 L611.0 308.5 L610.4 306.2 L609.8 307.4 L609.2 305.9 L608.6 308.3 L608.0 307.2 L607.4 310.2 L606.8 309.9 L606.2 311.3 L605.6 312.5 L605.0 311.8 L604.4 310.0 L603.8 308.3 L603.2 309.3 L602.6 308.6 L602.0 306.7 L601.4 305.0 L600.8 306.6 L600.2 306.0 L599.6 309.0 L599.0 309.9 L598.4 309.8 L597.8 311.8 L597.2 309.8 L596.6 312.4 L596.0 310.1 L595.4 310.5 L594.8 310.3 L594.2 309.5 L593.6 306.8 L593.0 308.0 L592.4 307.3 L591.8 306.1 L591.2 307.4 L590.6 310.4 L590.0 311.3 L589.4 309.2 L588.8 311.2 L588.2 309.8 L587.6 308.8 L587.0 308.0 L586.4 307.9 L585.8 308.6 L585.2 308.9 L584.6 305.4 L584.0 307.5 L583.4 306.9 L582.8 308.0 L582.2 309.0 L581.6 310.1 L581.0 309.9 L580.4 312.9 L579.8 309.5 L579.2 310.6 L578.6 308.9 L578.0 308.4 L577.4 309.0 L576.8 308.7 L576.2 305.3 L575.6 305.3 L575.0 308.0 L574.4 308.8 L573.8 308.6 L573.2 309.3 L572.6 311.0 L572.0 312.8 L571.4 310.3 L570.8 311.5 L570.2 310.4 L569.6 309.2 L569.0 306.8 L568.4 307.7 L567.8 305.9 L567.2 307.0 L566.6 307.5 L566.0 308.6 L565.4 307.8 L564.8 309.4 L564.2 310.1 L563.6 311.5 L563.0 311.9 L562.4 310.1 L561.8 309.0 L561.2 308.0 L560.6 309.4 L560.0 307.3 L559.4 306.9 L558.8 305.4 L558.2 307.4 L557.6 309.8 L557.0 309.2 L556.4 309.0 L555.8 311.9 L555.2 311.3 L554.6 309.7 L554.0 311.0 L553.4 310.7 L552.8 310.4 L552.2 308.1 L551.6 307.0 L551.0 307.8 L550.4 308.3 L549.8 308.3 L549.2 307.1 L548.6 308.9 L548.0 310.5 L547.4 311.9 L546.8 310.4 L546.2 311.3 L545.6 311.7 L545.0 310.6 L544.4 308.4 L543.8 308.8 L543.2 306.9 L542.6 307.8 L542.0 308.1 L541.4 306.6 L540.8 309.7 L540.2 309.9 L539.6 311.4 L539.0 311.4 L538.4 310.9 L537.8 311.3 L537.2 309.0 L536.6 310.4 L536.0 307.4 L535.4 309.1 L534.8 305.7 L534.2 305.1 L533.6 306.4 L533.0 308.8 L532.4 309.4 L531.8 309.2 L531.2 310.0 L530.6 310.0 L530.0 309.8 L529.4 311.8 L528.8 311.8 L528.2 308.1 L527.6 310.4 L527.0 309.1 L526.4 308.5 L525.8 306.7 L525.2 306.0 L524.6 309.1 L524.0 307.9 L523.4 309.8 L522.8 309.1 L522.2 310.4 L521.6 312.5 L521.0 310.4 L520.4 311.5 L519.8 309.1 L519.2 308.6 L518.6 306.5 L518.0 308.5 L517.4 307.6 L516.8 306.3 L516.2 306.5 L515.6 309.0 L515.0 308.1 L514.4 309.0 L513.8 310.9 L513.2 310.8 L512.6 310.2 L512.0 308.9 L511.4 309.2 L510.8 309.1 L510.2 309.1 L509.6 308.4 L509.0 305.6 L508.4 306.5 L507.8 306.7 L507.2 307.9 L506.6 309.6 L506.0 309.7 L505.4 309.3 L504.8 310.2 L504.2 309.8 L503.6 311.1 L503.0 309.6 L502.4 307.6 L501.8 306.5 L501.2 307.9 L500.6 306.8 L500.0 306.7 L499.4 309.1 L498.8 308.8 L498.2 310.2 L497.6 310.2 L497.0 312.0 L496.4 312.8 L495.8 309.7 L495.2 309.7 L494.6 308.9 L494.0 307.5 L493.4 308.3 L492.8 305.9 L492.2 306.8 L491.6 306.8 L491.0 306.5Z" fill="#00ff00"/>
<path d="M113.0 326.4 L113.6 324.3 L114.2 325.6 L114.8 326.1 L115.4 326.5 L116.0 325.4 L116.6 328.0 L117.2 328.3 L117.8 329.1 L118.4 329.2 L119.0 330.1 L119.6 328.5 L120.2 326.7 L120.8 327.2 L121.4 324.6 L122.0 325.5 L122.6 323.7 L123.2 325.4 L123.8 326.5 L124.4 327.2 L125.0 327.7 L125.6 328.2 L126.2 330.1 L126.8 329.7 L127.4 329.0 L128.0 327.7 L128.6 329.0 L129.2 327.6 L129.8 326.2 L130.4 323.8 L131.0 324.3 L131.6 326.6 L132.2 327.1 L132.8 326.6 L133.4 326.4 L134.0 326.8 L134.6 329.2 L135.2 329.5 L135.8 328.7 L136.4 328.5 L137.0 326.7 L137.6 327.5 L138.2 326.9 L138.2 332.3 L137.6 335.7 L137.0 335.3 L136.4 335.5 L135.8 338.0 L135.2 337.8 L134.6 336.1 L134.0 334.4 L133.4 335.4 L132.8 333.7 L132.2 333.3 L131.6 333.7 L131.0 332.3 L130.4 333.7 L129.8 334.5 L129.2 334.7 L128.6 335.1 L128.0 336.2 L127.4 336.3 L126.8 337.1 L126.2 337.3 L125.6 334.9 L125.0 336.7 L124.4 334.3 L123.8 332.4 L123.2 331.8 L122.6 333.4 L122.0 334.4 L121.4 333.6 L120.8 333.6 L120.2 334.2 L119.6 336.5 L119.0 336.8 L118.4 337.8 L117.8 337.1 L117.2 337.4 L116.6 336.0 L116.0 335.1 L115.4 334.9 L114.8 334.4 L114.2 331.1 L113.6 333.5 L113.0 333.7Z" fill="#00ff00"/>
<path d="M146.6 325.9 L147.2 324.2 L147.8 324.3 L148.4 326.1 L149.0 326.3 L149.6 326.7 L150.2 326.7 L150.8 328.1 L151.4 327.8 L152.0 330.8 L152.6 328.4 L153.2 327.5 L153.8 326.9 L154.4 326.4 L155.0 324.8 L155.0 333.6 L154.4 335.7 L153.8 335.1 L153.2 335.6 L152.6 336.2 L152.0 338.6 L151.4 337.8 L150.8 335.7 L150.2 335.4 L149.6 336.0 L149.0 334.8 L148.4 331.9 L147.8 332.3 L147.2 333.9 L146.6 335.0Z" fill="#00ff00"/>
<path d="M180.2 326.4 L180.8 324.7 L181.4 324.6 L182.0 324.9 L182.6 326.8 L183.2 327.6 L183.8 326.5 L184.4 327.9 L185.0 329.5 L185.6 329.3 L186.2 328.2 L186.8 327.0 L187.4 326.2 L188.0 327.9 L188.6 326.5 L189.2 324.9 L189.8 324.5 L190.4 325.0 L191.0 325.4 L191.6 325.8 L192.2 327.2 L192.8 329.7 L193.4 328.5 L194.0 328.3 L194.6 329.0 L195.2 326.7 L195.8 328.3 L196.4 327.2 L197.0 327.2 L197.0 335.0 L196.4 333.9 L195.8 335.5 L195.2 334.7 L194.6 336.5 L194.0 336.7 L193.4 335.9 L192.8 335.8 L192.2 334.0 L191.6 334.4 L191.0 334.4 L190.4 333.9 L189.8 332.3 L189.2 333.0 L188.6 332.6 L188.0 334.7 L187.4 334.2 L186.8 334.5 L186.2 337.9 L185.6 336.4 L185.0 336.5 L184.4 336.8 L183.8 335.7 L183.2 334.7 L182.6 333.0 L182.0 331.9 L181.4 331.6 L180.8 331.6 L180.2 334.3Z" fill="#00ff00"/>
<path d="M213.8 326.2 L214.4 326.1 L215.0 325.9 L215.6 326.8 L216.2 326.7 L216.8 327.1 L217.4 329.2 L218.0 326.8 L218.6 330.6 L219.2 330.2 L219.8 329.4 L220.4 328.3 L221.0 328.5 L221.6 326.5 L222.2 325.2 L222.8 326.2 L223.4 325.9 L224.0 325.7 L224.6 327.1 L225.2 327.5 L225.8 327.3 L226.4 328.6 L227.0 329.0 L227.6 328.6 L228.2 330.2 L228.8 327.7 L229.4 326.1 L230.0 325.6 L230.6 326.4 L231.2 324.2 L231.8 323.5 L232.4 325.7 L233.0 326.1 L233.6 325.6 L234.2 326.4 L234.8 327.5 L235.4 329.1 L236.0 329.7 L236.6 328.8 L237.2 327.4 L237.8 328.2 L238.4 327.6 L239.0 326.2 L239.6 324.4 L240.2 325.4 L240.8 325.4 L241.4 325.7 L242.0 326.6 L242.6 328.0 L243.2 329.0 L243.8 330.4 L244.4 329.0 L245.0 329.4 L245.6 329.3 L246.2 327.3 L246.8 325.8 L247.4 324.7 L248.0 324.6 L248.6 325.6 L249.2 324.0 L249.8 326.7 L250.4 327.7 L251.0 327.2 L251.6 327.8 L252.2 330.5 L252.8 329.4 L253.4 328.8 L254.0 328.5 L254.6 326.2 L255.2 325.9 L255.8 324.8 L255.8 334.5 L255.2 334.2 L254.6 335.4 L254.0 336.0 L253.4 336.6 L252.8 338.5 L252.2 335.2 L251.6 337.2 L251.0 334.1 L250.4 335.4 L249.8 333.2 L249.2 331.5 L248.6 332.5 L248.0 333.1 L247.4 334.0 L246.8 333.7 L246.2 335.2 L245.6 335.0 L245.0 337.8 L244.4 338.1 L243.8 335.9 L243.2 334.5 L242.6 336.8 L242.0 334.8 L241.4 332.3 L240.8 331.5 L240.2 331.6 L239.6 334.4 L239.0 333.6 L238.4 333.8 L237.8 334.1 L237.2 336.3 L236.6 336.4 L236.0 336.9 L235.4 336.1 L234.8 334.5 L234.2 334.4 L233.6 335.6 L233.0 332.5 L232.4 333.7 L231.8 333.1 L231.2 332.8 L230.6 334.2 L230.0 333.0 L229.4 335.1 L228.8 335.4 L228.2 336.4 L227.6 338.7 L227.0 337.5 L226.4 334.8 L225.8 334.1 L225.2 334.7 L224.6 334.9 L224.0 332.7 L223.4 331.6 L222.8 334.3 L222.2 333.5 L221.6 334.6 L221.0 335.2 L220.4 335.7 L219.8 336.0 L219.2 337.4 L218.6 336.0 L218.0 335.6 L217.4 334.4 L216.8 335.6 L216.2 335.2 L215.6 333.1 L215.0 332.9 L214.4 334.3 L213.8 333.9Z" fill="#00ff00"/>
<path d="M264.2 326.0 L264.8 325.9 L265.4 324.2 L266.0 325.4 L266.6 325.9 L267.2 325.6 L267.8 326.6 L268.4 327.2 L269.0 329.0 L269.6 328.3 L270.2 328.8 L270.8 328.4 L271.4 327.6 L272.0 328.1 L272.6 327.5 L272.6 334.1 L272.0 333.9 L271.4 334.3 L270.8 335.1 L270.2 336.1 L269.6 337.5 L269.0 336.5 L268.4 336.2 L267.8 334.5 L267.2 334.5 L266.6 333.1 L266.0 332.8 L265.4 330.9 L264.8 334.4 L264.2 333.0Z" fill="#00ff00"/>
<path d="M289.4 327.3 L290.0 325.8 L290.6 324.5 L291.2 324.7 L291.8 324.8 L292.4 328.4 L293.0 327.1 L293.6 328.0 L294.2 329.1 L294.8 329.6 L295.4 327.8 L296.0 328.0 L296.6 326.3 L297.2 325.6 L297.8 326.3 L297.8 333.3 L297.2 335.7 L296.6 335.0 L296.0 336.0 L295.4 335.8 L294.8 337.8 L294.2 336.0 L293.6 335.6 L293.0 334.5 L292.4 335.8 L291.8 332.3 L291.2 332.4 L290.6 331.6 L290.0 332.1 L289.4 334.9Z" fill="#00ff00"/>
<path d="M306.2 324.5 L306.8 325.1 L307.4 324.4 L308.0 325.0 L308.6 326.6 L309.2 326.2 L309.8 326.9 L310.4 327.6 L311.0 329.7 L311.6 330.9 L312.2 328.0 L312.8 329.1 L313.4 327.0 L314.0 326.6 L314.6 324.8 L314.6 333.7 L314.0 333.3 L313.4 333.5 L312.8 336.5 L312.2 335.4 L311.6 338.5 L311.0 338.1 L310.4 334.8 L309.8 336.8 L309.2 335.6 L308.6 332.2 L308.0 332.3 L307.4 332.4 L306.8 333.7 L306.2 333.8Z" fill="#00ff00"/>
<path d="M323.0 327.5 L323.6 326.8 L324.2 323.5 L324.8 327.1 L325.4 327.0 L326.0 326.1 L326.6 328.9 L327.2 327.7 L327.8 329.6 L328.4 330.0 L329.0 328.5 L329.6 327.3 L330.2 326.4 L330.8 327.7 L331.4 326.1 L331.4 332.4 L330.8 334.5 L330.2 336.1 L329.6 335.4 L329.0 336.1 L328.4 336.2 L327.8 338.2 L327.2 334.8 L326.6 334.5 L326.0 334.7 L325.4 334.3 L324.8 334.5 L324.2 333.0 L323.6 334.1 L323.0 333.2Z" fill="#00ff00"/>
<path d="M339.8 324.6 L340.4 324.9 L341.0 323.3 L341.6 324.9 L342.2 325.7 L342.8 327.0 L343.4 328.8 L344.0 328.1 L344.6 328.4 L345.2 329.5 L345.8 328.4 L346.4 327.3 L347.0 327.8 L347.6 328.2 L348.2 327.5 L348.2 333.3 L347.6 333.4 L347.0 333.7 L346.4 335.1 L345.8 336.3 L345.2 336.6 L344.6 336.5 L344.0 336.8 L343.4 336.4 L342.8 333.7 L342.2 333.7 L341.6 331.9 L341.0 333.9 L340.4 331.4 L339.8 333.1Z" fill="#00ff00"/>
<path d="M373.4 326.3 L374.0 326.7 L374.6 326.0 L375.2 325.9 L375.8 325.9 L376.4 328.5 L377.0 327.1 L377.6 326.9 L378.2 328.3 L378.8 329.6 L379.4 329.2 L380.0 329.0 L380.6 326.1 L381.2 325.7 L381.8 326.4 L382.4 324.7 L383.0 323.2 L383.6 324.4 L384.2 325.6 L384.8 326.2 L385.4 327.2 L386.0 328.8 L386.6 328.6 L387.2 328.8 L387.8 330.1 L388.4 327.4 L389.0 327.5 L389.6 328.2 L390.2 326.4 L390.2 333.1 L389.6 335.4 L389.0 336.1 L388.4 334.7 L387.8 336.6 L387.2 337.2 L386.6 336.8 L386.0 336.8 L385.4 336.5 L384.8 333.1 L384.2 333.8 L383.6 333.8 L383.0 331.0 L382.4 332.4 L381.8 334.2 L381.2 334.4 L380.6 334.9 L380.0 335.5 L379.4 337.8 L378.8 336.5 L378.2 336.3 L377.6 335.3 L377.0 336.0 L376.4 333.4 L375.8 333.4 L375.2 332.3 L374.6 333.4 L374.0 334.4 L373.4 334.8Z" fill="#00ff00"/>
<path d="M407.0 325.3 L407.6 325.9 L408.2 325.0 L408.8 323.9 L409.4 325.6 L410.0 325.7 L410.6 328.9 L411.2 330.0 L411.8 329.5 L412.4 329.2 L413.0 330.3 L413.6 328.0 L414.2 327.1 L414.8 327.1 L415.4 326.6 L415.4 332.5 L414.8 335.3 L414.2 333.6 L413.6 335.6 L413.0 336.4 L412.4 336.4 L411.8 338.2 L411.2 336.1 L410.6 336.4 L410.0 333.5 L409.4 334.4 L408.8 333.8 L408.2 333.6 L407.6 331.7 L407.0 333.8Z" fill="#00ff00"/>
<path d="M440.6 326.9 L441.2 324.0 L441.8 325.3 L442.4 324.3 L443.0 324.8 L443.6 326.4 L444.2 326.3 L444.8 327.7 L445.4 330.7 L446.0 330.4 L446.6 329.9 L447.2 328.3 L447.8 328.1 L448.4 325.8 L449.0 324.5 L449.0 332.4 L448.4 335.1 L447.8 334.4 L447.2 334.3 L446.6 337.0 L446.0 338.5 L445.4 337.3 L444.8 335.6 L444.2 334.3 L443.6 333.4 L443.0 335.0 L442.4 334.4 L441.8 332.0 L441.2 332.5 L440.6 334.9Z" fill="#00ff00"/>
<path d="M457.4 326.8 L458.0 325.7 L458.6 324.0 L459.2 325.4 L459.8 326.9 L460.4 327.1 L461.0 327.0 L461.6 326.9 L462.2 330.2 L462.8 328.8 L463.4 328.9 L464.0 328.7 L464.6 326.6 L465.2 326.5 L465.8 326.0 L466.4 325.3 L467.0 325.4 L467.6 325.3 L468.2 325.2 L468.8 328.0 L469.4 327.7 L470.0 329.7 L470.6 327.7 L471.2 329.4 L471.8 329.4 L472.4 329.4 L473.0 327.8 L473.6 328.0 L474.2 324.5 L474.2 333.7 L473.6 333.1 L473.0 334.7 L472.4 335.3 L471.8 335.9 L471.2 335.9 L470.6 337.6 L470.0 337.4 L469.4 335.1 L468.8 335.3 L468.2 335.0 L467.6 333.3 L467.0 332.4 L466.4 334.2 L465.8 334.9 L465.2 335.6 L464.6 335.9 L464.0 337.2 L463.4 337.2 L462.8 337.9 L462.2 337.3 L461.6 335.3 L461.0 335.1 L460.4 336.0 L459.8 333.2 L459.2 332.0 L458.6 330.8 L458.0 331.8 L457.4 333.1Z" fill="#00ff00"/>
<path d="M482.6 326.7 L483.2 325.6 L483.8 325.8 L484.4 324.2 L485.0 324.8 L485.6 326.9 L486.2 327.2 L486.8 329.9 L487.4 328.2 L488.0 331.1 L488.6 330.3 L489.2 329.2 L489.8 328.2 L490.4 326.0 L491.0 325.9 L491.0 332.1 L490.4 335.5 L489.8 335.3 L489.2 335.1 L488.6 336.5 L488.0 338.2 L487.4 337.4 L486.8 336.0 L486.2 334.9 L485.6 334.7 L485.0 334.9 L484.4 333.5 L483.8 333.2 L483.2 332.7 L482.6 333.3Z" fill="#00ff00"/>
<path d="M113.0 305.2V331.0 M138.2 331.0V305.2" stroke="#00dd00" stroke-width="1"/>
<path d="M146.6 305.2V331.0 M155.0 331.0V305.2" stroke="#00dd00" stroke-width="1"/>
<path d="M180.2 305.2V331.0 M197.0 331.0V305.2" stroke="#00dd00" stroke-width="1"/>
<path d="M213.8 305.2V331.0 M255.8 331.0V305.2" stroke="#00dd00" stroke-width="1"/>
<path d="M264.2 305.2V331.0 M272.6 331.0V305.2" stroke="#00dd00" stroke-width="1"/>
<path d="M289.4 305.2V331.0 M297.8 331.0V305.2" stroke="#00dd00" stroke-width="1"/>
<path d="M306.2 305.2V331.0 M314.6 331.0V305.2" stroke="#00dd00" stroke-width="1"/>
<path d="M323.0 305.2V331.0 M331.4 331.0V305.2" stroke="#00dd00" stroke-width="1"/>
<path d="M339.8 305.2V331.0 M348.2 331.0V305.2" stroke="#00dd00" stroke-width="1"/>
<path d="M373.4 305.2V331.0 M390.2 331.0V305.2" stroke="#00dd00" stroke-width="1"/>
<path d="M407.0 305.2V331.0 M415.4 331.0V305.2" stroke="#00dd00" stroke-width="1"/>
<path d="M440.6 305.2V331.0 M449.0 331.0V305.2" stroke="#00dd00" stroke-width="1"/>
<path d="M457.4 305.2V331.0 M474.2 331.0V305.2" stroke="#00dd00" stroke-width="1"/>
<path d="M482.6 305.2V331.0 M491.0 331.0V305.2" stroke="#00dd00" stroke-width="1"/>
<path d="M71.6 266.4V395.6 M97.8 266.4V395.6 M124.1 266.4V395.6 M150.4 266.4V395.6 M176.7 266.4V395.6 M202.9 266.4V395.6 M229.2 266.4V395.6 M255.5 266.4V395.6 M281.8 266.4V395.6 M308.0 266.4V395.6 M334.3 266.4V395.6 M360.6 266.4V395.6 M386.8 266.4V395.6 M413.1 266.4V395.6 M439.4 266.4V395.6 M465.7 266.4V395.6 M491.9 266.4V395.6 M518.2 266.4V395.6 M544.5 266.4V395.6 M570.8 266.4V395.6 M597.0 266.4V395.6 M623.3 266.4V395.6" stroke="#c8c8c8" stroke-width="1" opacity="0.4" shape-rendering="crispEdges"/>
<path d="M238.5 266.4V395.6" stroke="#1818c8" stroke-width="1"/>
<path d="M432 266.4V395.6" stroke="#b03a3a" stroke-width="1" opacity="0.85"/>
<circle cx="432" cy="352" r="1.5" fill="none" stroke="#a03030" stroke-width="0.8"/>
<path d="M40.5 266.4H45.3 M40.5 279.3H45.3 M40.5 292.2H45.3 M40.5 305.2H45.3 M40.5 318.1H45.3 M40.5 331.0H45.3 M40.5 343.9H45.3 M40.5 356.8H45.3 M40.5 369.8H45.3 M40.5 382.7H45.3 M40.5 395.6H45.3 M45.3 395.6V398.6 M71.6 395.6V398.6 M97.8 395.6V398.6 M124.1 395.6V398.6 M150.4 395.6V398.6 M176.7 395.6V398.6 M202.9 395.6V398.6 M229.2 395.6V398.6 M255.5 395.6V398.6 M281.8 395.6V398.6 M308.0 395.6V398.6 M334.3 395.6V398.6 M360.6 395.6V398.6 M386.8 395.6V398.6 M413.1 395.6V398.6 M439.4 395.6V398.6 M465.7 395.6V398.6 M491.9 395.6V398.6 M518.2 395.6V398.6 M544.5 395.6V398.6 M570.8 395.6V398.6 M597.0 395.6V398.6 M623.3 395.6V398.6 M625.4 395.6V398.6" stroke="#444" stroke-width="1" shape-rendering="crispEdges"/>
</svg>
<div class="t" style="left:0px;width:39.5px;text-align:right;top:262.1px;line-height:10px;font-size:8px;letter-spacing:-0.3px;color:#222">4.0</div>
<div class="t" style="left:0px;width:39.5px;text-align:right;top:275.0px;line-height:10px;font-size:8px;letter-spacing:-0.3px;color:#222">3.5</div>
<div class="t" style="left:0px;width:39.5px;text-align:right;top:287.9px;line-height:10px;font-size:8px;letter-spacing:-0.3px;color:#222">3.0</div>
<div class="t" style="left:0px;width:39.5px;text-align:right;top:300.9px;line-height:10px;font-size:8px;letter-spacing:-0.3px;color:#222">2.5</div>
<div class="t" style="left:0px;width:39.5px;text-align:right;top:313.8px;line-height:10px;font-size:8px;letter-spacing:-0.3px;color:#222">2.0</div>
<div class="t" style="left:0px;width:39.5px;text-align:right;top:326.7px;line-height:10px;font-size:8px;letter-spacing:-0.3px;color:#222">1.5</div>
<div class="t" style="left:0px;width:39.5px;text-align:right;top:339.6px;line-height:10px;font-size:8px;letter-spacing:-0.3px;color:#222">1.0</div>
<div class="t" style="left:0px;width:39.5px;text-align:right;top:352.5px;line-height:10px;font-size:8px;letter-spacing:-0.3px;color:#222">0.5</div>
<div class="t" style="left:0px;width:39.5px;text-align:right;top:365.5px;line-height:10px;font-size:8px;letter-spacing:-0.3px;color:#222">0.0</div>
<div class="t" style="left:0px;width:39.5px;text-align:right;top:378.4px;line-height:10px;font-size:8px;letter-spacing:-0.3px;color:#222">-0.5</div>
<div class="t" style="left:0px;width:39.5px;text-align:right;top:391.3px;line-height:10px;font-size:8px;letter-spacing:-0.3px;color:#222">-1.0</div>
<div class="t" style="left:25.3px;width:40px;text-align:center;top:397.8px;line-height:10px;font-size:7.6px;letter-spacing:-0.2px;color:#222;transform:scaleX(0.86);transform-origin:50% 0">0</div>
<div class="t" style="left:51.6px;width:40px;text-align:center;top:397.8px;line-height:10px;font-size:7.6px;letter-spacing:-0.2px;color:#222;transform:scaleX(0.86);transform-origin:50% 0">500</div>
<div class="t" style="left:77.8px;width:40px;text-align:center;top:397.8px;line-height:10px;font-size:7.6px;letter-spacing:-0.2px;color:#222;transform:scaleX(0.86);transform-origin:50% 0">1000</div>
<div class="t" style="left:104.1px;width:40px;text-align:center;top:397.8px;line-height:10px;font-size:7.6px;letter-spacing:-0.2px;color:#222;transform:scaleX(0.86);transform-origin:50% 0">1500</div>
<div class="t" style="left:130.4px;width:40px;text-align:center;top:397.8px;line-height:10px;font-size:7.6px;letter-spacing:-0.2px;color:#222;transform:scaleX(0.86);transform-origin:50% 0">2000</div>
<div class="t" style="left:156.7px;width:40px;text-align:center;top:397.8px;line-height:10px;font-size:7.6px;letter-spacing:-0.2px;color:#222;transform:scaleX(0.86);transform-origin:50% 0">2500</div>
<div class="t" style="left:182.9px;width:40px;text-align:center;top:397.8px;line-height:10px;font-size:7.6px;letter-spacing:-0.2px;color:#222;transform:scaleX(0.86);transform-origin:50% 0">3000</div>
<div class="t" style="left:209.2px;width:40px;text-align:center;top:397.8px;line-height:10px;font-size:7.6px;letter-spacing:-0.2px;color:#222;transform:scaleX(0.86);transform-origin:50% 0">3500</div>
<div class="t" style="left:235.5px;width:40px;text-align:center;top:397.8px;line-height:10px;font-size:7.6px;letter-spacing:-0.2px;color:#222;transform:scaleX(0.86);transform-origin:50% 0">4000</div>
<div class="t" style="left:261.8px;width:40px;text-align:center;top:397.8px;line-height:10px;font-size:7.6px;letter-spacing:-0.2px;color:#222;transform:scaleX(0.86);transform-origin:50% 0">4500</div>
<div class="t" style="left:288.0px;width:40px;text-align:center;top:397.8px;line-height:10px;font-size:7.6px;letter-spacing:-0.2px;color:#222;transform:scaleX(0.86);transform-origin:50% 0">5000</div>
<div class="t" style="left:314.3px;width:40px;text-align:center;top:397.8px;line-height:10px;font-size:7.6px;letter-spacing:-0.2px;color:#222;transform:scaleX(0.86);transform-origin:50% 0">5500</div>
<div class="t" style="left:340.6px;width:40px;text-align:center;top:397.8px;line-height:10px;font-size:7.6px;letter-spacing:-0.2px;color:#222;transform:scaleX(0.86);transform-origin:50% 0">6000</div>
<div class="t" style="left:366.8px;width:40px;text-align:center;top:397.8px;line-height:10px;font-size:7.6px;letter-spacing:-0.2px;color:#222;transform:scaleX(0.86);transform-origin:50% 0">6500</div>
<div class="t" style="left:393.1px;width:40px;text-align:center;top:397.8px;line-height:10px;font-size:7.6px;letter-spacing:-0.2px;color:#222;transform:scaleX(0.86);transform-origin:50% 0">7000</div>
<div class="t" style="left:419.4px;width:40px;text-align:center;top:397.8px;line-height:10px;font-size:7.6px;letter-spacing:-0.2px;color:#222;transform:scaleX(0.86);transform-origin:50% 0">7500</div>
<div class="t" style="left:445.7px;width:40px;text-align:center;top:397.8px;line-height:10px;font-size:7.6px;letter-spacing:-0.2px;color:#222;transform:scaleX(0.86);transform-origin:50% 0">8000</div>
<div class="t" style="left:471.9px;width:40px;text-align:center;top:397.8px;line-height:10px;font-size:7.6px;letter-spacing:-0.2px;color:#222;transform:scaleX(0.86);transform-origin:50% 0">8500</div>
<div class="t" style="left:498.2px;width:40px;text-align:center;top:397.8px;line-height:10px;font-size:7.6px;letter-spacing:-0.2px;color:#222;transform:scaleX(0.86);transform-origin:50% 0">9000</div>
<div class="t" style="left:524.5px;width:40px;text-align:center;top:397.8px;line-height:10px;font-size:7.6px;letter-spacing:-0.2px;color:#222;transform:scaleX(0.86);transform-origin:50% 0">9500</div>
<div class="t" style="left:550.8px;width:40px;text-align:center;top:397.8px;line-height:10px;font-size:7.6px;letter-spacing:-0.2px;color:#222;transform:scaleX(0.86);transform-origin:50% 0">10000</div>
<div class="t" style="left:577.0px;width:40px;text-align:center;top:397.8px;line-height:10px;font-size:7.6px;letter-spacing:-0.2px;color:#222;transform:scaleX(0.86);transform-origin:50% 0">10500</div>
<div class="t" style="left:604.4px;width:40px;text-align:center;top:397.8px;line-height:10px;font-size:7.6px;letter-spacing:-0.2px;color:#222;transform:scaleX(0.86);transform-origin:50% 0">11040</div>
<div class="t" style="left:313px;top:407.8px;line-height:10px;font-size:7.2px;color:#111;transform:scaleX(0.82);transform-origin:0 0">№ отсчета АЦП</div>
<div class="t" style="left:1.5px;top:329.5px;width:40px;text-align:center;line-height:10px;font-size:7.2px;font-weight:bold;color:#222;transform:rotate(-90deg) scaleX(0.68);transform-origin:20px 5px">Амплитуда, В</div>
</body></html>
